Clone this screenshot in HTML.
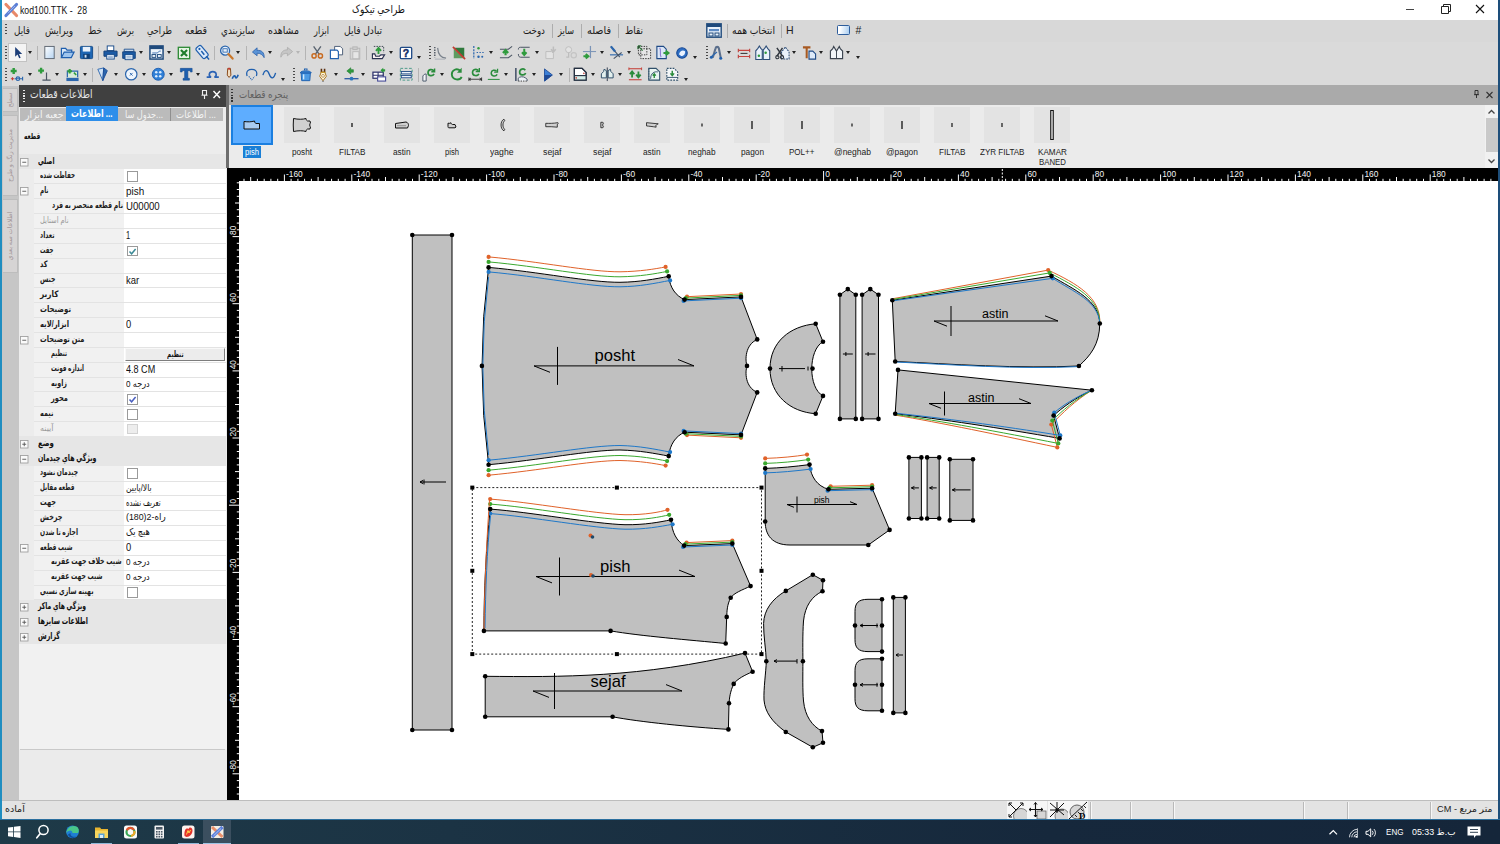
<!DOCTYPE html>
<html lang="fa"><head><meta charset="utf-8"><title>kod100.TTK</title><style>
*{box-sizing:border-box;margin:0;padding:0}
html,body{width:1500px;height:844px;overflow:hidden}
body{position:relative;background:#d9d9d9;font-family:"Liberation Sans","DejaVu Sans",sans-serif;font-size:11px;color:#000}
.a{position:absolute}
.t{position:absolute;white-space:nowrap;line-height:1}
svg{position:absolute;overflow:visible}
</style></head><body>
<div class="a" style="left:0px;top:0px;width:1500px;height:844px;background:#d9d9d9;"></div>
<div class="a" style="left:0px;top:0px;width:1500px;height:20px;background:#ffffff;"></div>
<div class="a" style="left:2px;top:20px;width:1496px;height:22px;background:#d8d8d8;"></div>
<div class="a" style="left:2px;top:42px;width:1496px;height:44px;background:#dadada;"></div>
<div class="a" style="left:0px;top:0px;width:2px;height:820px;background:#1f8dc0;"></div>
<div class="a" style="left:1498px;top:0px;width:2px;height:820px;background:#1d4e7a;"></div>
<svg class="a" style="left:4px;top:2px" width="15" height="16" viewBox="0 0 15 16"><path d="M2 2.5L12.5 13.5" stroke="#e8896a" stroke-width="3.2" stroke-linecap="round"/><path d="M12.5 2.5L2 13.5" stroke="#5b7fd6" stroke-width="3.2" stroke-linecap="round"/><path d="M11 4L4 11.2" stroke="#9db4ec" stroke-width="1"/></svg>
<div class="t f" id="f1" style="left:20px;transform-origin:0 0;top:4.7px;font-size:10.5px;color:#111;transform:scaleX(0.8259);">kod100.TTK -&nbsp; 28</div>
<div class="t f" id="f2" style="left:352px;transform-origin:0 0;top:3.5px;font-size:10.5px;color:#111;transform:scaleX(0.8555);direction:rtl;">طراحي تيكوک</div>
<svg class="a" style="left:1400px;top:0" width="100" height="20" viewBox="0 0 100 20"><path d="M6 9.5H14" stroke="#444" stroke-width="1"/><path d="M41.5 6.5H48.5V13.5H41.5Z M43.5 6.5V4.5H50.5V11.5H48.5" fill="none" stroke="#222" stroke-width="1"/><path d="M76 5L84 13M84 5L76 13" stroke="#111" stroke-width="1.1"/></svg>
<div class="a" style="left:5px;top:24px;width:1.6px;height:12px;background:repeating-linear-gradient(#4a4a4a 0 1.4px,transparent 1.4px 3px)"></div>
<div class="t f" id="f3" style="left:14px;transform-origin:0 0;top:22px;font-size:10.5px;color:#1a1a1a;transform:scaleX(0.8380);direction:rtl;height:16px;line-height:16px;">فايل</div>
<div class="t f" id="f4" style="left:45px;transform-origin:0 0;top:22px;font-size:10.5px;color:#1a1a1a;transform:scaleX(0.8481);direction:rtl;height:16px;line-height:16px;">ويرايش</div>
<div class="t f" id="f5" style="left:88px;transform-origin:0 0;top:22px;font-size:10.5px;color:#1a1a1a;transform:scaleX(0.8501);direction:rtl;height:16px;line-height:16px;">خط</div>
<div class="t f" id="f6" style="left:117px;transform-origin:0 0;top:22px;font-size:10.5px;color:#1a1a1a;transform:scaleX(0.7890);direction:rtl;height:16px;line-height:16px;">برش</div>
<div class="t f" id="f7" style="left:147px;transform-origin:0 0;top:22px;font-size:10.5px;color:#1a1a1a;transform:scaleX(0.7737);direction:rtl;height:16px;line-height:16px;">طراحي</div>
<div class="t f" id="f8" style="left:185px;transform-origin:0 0;top:22px;font-size:10.5px;color:#1a1a1a;transform:scaleX(0.9043);direction:rtl;height:16px;line-height:16px;">قطعه</div>
<div class="t f" id="f9" style="left:221px;transform-origin:0 0;top:22px;font-size:10.5px;color:#1a1a1a;transform:scaleX(0.8385);direction:rtl;height:16px;line-height:16px;">سايزبندي</div>
<div class="t f" id="f10" style="left:268px;transform-origin:0 0;top:22px;font-size:10.5px;color:#1a1a1a;transform:scaleX(0.8921);direction:rtl;height:16px;line-height:16px;">مشاهده</div>
<div class="t f" id="f11" style="left:314px;transform-origin:0 0;top:22px;font-size:10.5px;color:#1a1a1a;transform:scaleX(0.7643);direction:rtl;height:16px;line-height:16px;">ابزار</div>
<div class="t f" id="f12" style="left:344px;transform-origin:0 0;top:22px;font-size:10.5px;color:#1a1a1a;transform:scaleX(0.8714);direction:rtl;height:16px;line-height:16px;">تبادل فايل</div>
<div class="t f" id="f13" style="left:523px;transform-origin:0 0;top:22px;font-size:10.5px;color:#1a1a1a;transform:scaleX(0.8282);direction:rtl;height:16px;line-height:16px;">دوخت</div>
<div class="t f" id="f14" style="left:558px;transform-origin:0 0;top:22px;font-size:10.5px;color:#1a1a1a;transform:scaleX(0.7722);direction:rtl;height:16px;line-height:16px;">سايز</div>
<div class="t f" id="f15" style="left:587px;transform-origin:0 0;top:22px;font-size:10.5px;color:#1a1a1a;transform:scaleX(0.9143);direction:rtl;height:16px;line-height:16px;">فاصله</div>
<div class="t f" id="f16" style="left:625px;transform-origin:0 0;top:22px;font-size:10.5px;color:#1a1a1a;transform:scaleX(0.8508);direction:rtl;height:16px;line-height:16px;">نقاط</div>
<div class="t f" id="f17" style="left:732px;transform-origin:0 0;top:22px;font-size:10.5px;color:#1a1a1a;transform:scaleX(0.8770);direction:rtl;height:16px;line-height:16px;">انتخاب همه</div>
<div class="t" style="left:786px;top:24.5px;font-size:10.5px;color:#222;">H</div>
<div class="t" style="left:855.5px;top:24.5px;font-size:10.5px;color:#222;">#</div>
<div class="a" style="left:551.5px;top:23.5px;width:1px;height:14px;background:#adadad;"></div>
<div class="a" style="left:580.5px;top:23.5px;width:1px;height:14px;background:#adadad;"></div>
<div class="a" style="left:617.5px;top:23.5px;width:1px;height:14px;background:#adadad;"></div>
<div class="a" style="left:727px;top:23.5px;width:1px;height:14px;background:#adadad;"></div>
<div class="a" style="left:780.5px;top:23.5px;width:1px;height:14px;background:#adadad;"></div>
<svg class="a" style="left:706px;top:23px" width="16" height="15" viewBox="0 0 16 15"><rect x="0.8" y="0.8" width="14.4" height="13.4" fill="#e9f1fa" stroke="#1f4a7c" stroke-width="1.4"/><rect x="1" y="1" width="14" height="3" fill="#1f4a7c"/><rect x="3" y="6" width="10" height="2.2" fill="#5d8bc4"/><rect x="3" y="10" width="4" height="3" fill="none" stroke="#1f4a7c"/><rect x="9" y="10" width="4" height="3" fill="none" stroke="#1f4a7c"/></svg>
<div class="a" style="left:837px;top:25px;width:13px;height:10px;border:1px solid #2d5d9c;border-radius:1.5px;background:linear-gradient(100deg,#ffffff 20%,#a9cdf0)"></div>
<div class="a" style="left:5px;top:46px;width:1.6px;height:14px;background:repeating-linear-gradient(#4a4a4a 0 1.4px,transparent 1.4px 3px)"></div>
<div class="a" style="left:5px;top:68px;width:1.6px;height:14px;background:repeating-linear-gradient(#4a4a4a 0 1.4px,transparent 1.4px 3px)"></div>
<div class="a" style="left:8px;top:43px;width:19px;height:19px;background:#f4f4f4;border:1px solid #c2c2c2"></div>
<svg class="a" style="left:10px;top:45px" width="15" height="15" viewBox="0 0 16 16"><path d="M5.5 2V12.5L8 10.2L9.8 14.2L11.4 13.5L9.6 9.6H13Z" fill="#1d3e78"/></svg>
<div class="a" style="left:28px;top:51px;width:0;height:0;border-left:2.5px solid transparent;border-right:2.5px solid transparent;border-top:3px solid #222"></div>
<div class="a" style="left:37px;top:45.5px;width:1px;height:14px;background:#b4b4b4;"></div>
<svg class="a" style="left:41.5px;top:45px" width="15" height="15" viewBox="0 0 16 16"><defs><linearGradient id="gnew" x1="0" y1="0" x2="1" y2="1"><stop offset="0" stop-color="#fff"/><stop offset="1" stop-color="#b6d4f2"/></linearGradient></defs><rect x="3" y="1.5" width="10" height="13" fill="url(#gnew)" stroke="#5b6470"/></svg>
<svg class="a" style="left:60px;top:45px" width="15" height="15" viewBox="0 0 16 16"><path d="M1.5 13.5V3.5H6L7.5 5.5H12.5V7.5" fill="#dbe9f8" stroke="#1f5fae" stroke-width="1.3"/><path d="M1.5 13.5L4.5 7.5H15L12 13.5Z" fill="#9fc5ee" stroke="#1f5fae" stroke-width="1.3"/></svg>
<svg class="a" style="left:79px;top:45px" width="15" height="15" viewBox="0 0 16 16"><rect x="1.5" y="1.5" width="13" height="13" rx="1" fill="#1d66b4" stroke="#134a86"/><rect x="4" y="2" width="8" height="5" fill="#e8f1fb"/><rect x="4.5" y="9.5" width="7" height="5" fill="#0f3f76"/><rect x="6" y="10.5" width="2" height="3" fill="#cfe0f3"/></svg>
<div class="a" style="left:98px;top:45.5px;width:1px;height:14px;background:#b4b4b4;"></div>
<svg class="a" style="left:102.5px;top:45px" width="15" height="15" viewBox="0 0 16 16"><rect x="4.5" y="1" width="7" height="5" fill="#fff" stroke="#174a8a"/><path d="M1 6.5H15V12H1Z" fill="#1b5ba6" stroke="#123f78"/><rect x="4" y="10" width="8" height="5" fill="#eaf2fb" stroke="#174a8a"/><path d="M5.5 12H10.5M5.5 13.5H10.5" stroke="#6f93c0" stroke-width=".8"/></svg>
<svg class="a" style="left:122px;top:46.5px" width="14" height="14" viewBox="0 0 16 16"><path d="M2.5 5H13.5V2.5H2.5Z" fill="#d9e7f6" stroke="#174a8a"/><path d="M0.8 5.5H15.2V13H0.8Z" fill="#1b5ba6" stroke="#123f78"/><rect x="3.5" y="8.5" width="9" height="6" fill="#eaf2fb" stroke="#174a8a"/><path d="M5 10.5H11M5 12.5H11" stroke="#6f93c0" stroke-width=".8"/></svg>
<div class="a" style="left:139px;top:51px;width:0;height:0;border-left:2.5px solid transparent;border-right:2.5px solid transparent;border-top:3px solid #222"></div>
<svg class="a" style="left:148.5px;top:45px" width="15" height="15" viewBox="0 0 16 16"><rect x="1" y="1" width="14" height="14" fill="#eef4fb" stroke="#1f4a7c" stroke-width="1.6"/><rect x="1" y="1" width="14" height="3.4" fill="#1f4a7c"/><path d="M3.5 8.5H9L11 6.5H12.5" stroke="#3b6eaf" fill="none"/><rect x="3.2" y="10.2" width="4" height="3" fill="none" stroke="#1f4a7c"/><rect x="9" y="10.2" width="4" height="3" fill="none" stroke="#1f4a7c"/></svg>
<div class="a" style="left:166.5px;top:51px;width:0;height:0;border-left:2.5px solid transparent;border-right:2.5px solid transparent;border-top:3px solid #222"></div>
<svg class="a" style="left:176.5px;top:46px" width="14" height="14" viewBox="0 0 16 16"><rect x="1.5" y="1.5" width="13" height="13" fill="#e6f4e4" stroke="#2d8a35" stroke-width="1.5"/><path d="M4.5 4.5L11.5 11.5M11.5 4.5L4.5 11.5" stroke="#1e7d2b" stroke-width="2.4"/></svg>
<svg class="a" style="left:194.5px;top:45px" width="15" height="15" viewBox="0 0 16 16"><g transform="rotate(-40 8 8)"><rect x="4.5" y="0" width="7" height="14.5" rx="2" fill="#dbe9f9" stroke="#1f5fae" stroke-width="1.3"/><circle cx="8" cy="3" r="1.2" fill="#1f5fae"/><path d="M8 6V11" stroke="#1f5fae" stroke-width="1.6"/></g><path d="M12 12L15 15.5" stroke="#1f5fae" stroke-width="1.5"/></svg>
<div class="a" style="left:214px;top:45.5px;width:1px;height:14px;background:#b4b4b4;"></div>
<svg class="a" style="left:219px;top:45px" width="15" height="15" viewBox="0 0 16 16"><circle cx="6.5" cy="6" r="4.8" fill="#e8f1fb" stroke="#2b66ad" stroke-width="1.4"/><rect x="4.2" y="4" width="4.6" height="3.6" fill="none" stroke="#2b66ad" stroke-width=".9"/><path d="M10 9.7L14.5 14.5" stroke="#c9772b" stroke-width="2.4" stroke-linecap="round"/></svg>
<div class="a" style="left:236px;top:51px;width:0;height:0;border-left:2.5px solid transparent;border-right:2.5px solid transparent;border-top:3px solid #222"></div>
<div class="a" style="left:246px;top:45.5px;width:1px;height:14px;background:#b4b4b4;"></div>
<svg class="a" style="left:250.5px;top:45px" width="15" height="15" viewBox="0 0 16 16"><path d="M1.5 7.5L6.5 3V5.8C11 5.2,14.5 8,14 13.5C12.5 10.5,10 8.6,6.5 8.8V11.5Z" fill="#5a93d6" stroke="#2a5fa8" stroke-width=".8"/></svg>
<div class="a" style="left:268px;top:51px;width:0;height:0;border-left:2.5px solid transparent;border-right:2.5px solid transparent;border-top:3px solid #222"></div>
<svg class="a" style="left:278.5px;top:45px" width="15" height="15" viewBox="0 0 16 16"><path d="M14.5 7L9 2.5V5.2C4.5 5,1.5 8,2 13C3.2 10,5.5 8.6,9 8.9V11.5Z" fill="#c6c6c6" stroke="#adadad" stroke-width=".9"/></svg>
<div class="a" style="left:295.5px;top:51px;width:0;height:0;border-left:2.5px solid transparent;border-right:2.5px solid transparent;border-top:3px solid #b5b5b5"></div>
<div class="a" style="left:305px;top:45.5px;width:1px;height:14px;background:#b4b4b4;"></div>
<svg class="a" style="left:309.75px;top:45.25px" width="14.5" height="14.5" viewBox="0 0 16 16"><path d="M4 1.5L10 10M12 1.5L6 10" stroke="#5a6470" stroke-width="1.5"/><circle cx="4.5" cy="12" r="2.3" fill="none" stroke="#c86a20" stroke-width="1.6"/><circle cx="11.5" cy="12" r="2.3" fill="none" stroke="#c86a20" stroke-width="1.6"/></svg>
<svg class="a" style="left:328.5px;top:45px" width="15" height="15" viewBox="0 0 16 16"><path d="M6 1.5H12L14.5 4V10.5H6Z" fill="#fff" stroke="#475a74"/><path d="M1.5 5.5H8.5L10 7V14.5H1.5Z" fill="#fff" stroke="#1f5fae" stroke-width="1.2"/></svg>
<svg class="a" style="left:348px;top:45.5px" width="14" height="14" viewBox="0 0 16 16"><rect x="2.5" y="2.5" width="11" height="12.5" fill="#d6d6d6" stroke="#b3b3b3"/><rect x="5.5" y="1" width="5" height="3" fill="#cdcdcd" stroke="#b3b3b3"/><rect x="5.5" y="6.5" width="7" height="8" fill="#e6e6e6" stroke="#b8b8b8"/></svg>
<div class="a" style="left:366px;top:45.5px;width:1px;height:14px;background:#b4b4b4;"></div>
<svg class="a" style="left:370.5px;top:45px" width="15" height="15" viewBox="0 0 16 16"><path d="M3 1.5H13.5V8" fill="none" stroke="#39424e" stroke-dasharray="1.6 1.2"/><path d="M8 9.5V4M5.3 6.3L8 3.2L10.7 6.3" fill="none" stroke="#2f9b3d" stroke-width="2"/><path d="M1.5 9.5V14.5H12L14.5 10.5H10.5L9 12H5L4 9.5Z" fill="#fbf3f3" stroke="#2a3250" stroke-width="1.2"/></svg>
<div class="a" style="left:388.5px;top:51px;width:0;height:0;border-left:2.5px solid transparent;border-right:2.5px solid transparent;border-top:3px solid #222"></div>
<svg class="a" style="left:398.5px;top:45.5px" width="14" height="14" viewBox="0 0 16 16"><rect x="1.5" y="1.5" width="13" height="13" rx="1.5" fill="#fff" stroke="#1f4a86" stroke-width="1.5"/><text x="8" y="12.3" font-size="12" font-weight="bold" text-anchor="middle" fill="#14306a" stroke="#14306a" stroke-width=".5" font-family="Liberation Sans">?</text></svg>
<div class="a" style="left:416.5px;top:55.5px;width:0;height:0;border-left:2.5px solid transparent;border-right:2.5px solid transparent;border-top:3px solid #222"></div>
<div class="a" style="left:429px;top:46px;width:1.6px;height:14px;background:repeating-linear-gradient(#4a4a4a 0 1.4px,transparent 1.4px 3px)"></div>
<svg class="a" style="left:431.5px;top:45.5px" width="15" height="15" viewBox="0 0 16 16"><path d="M3 1V12" stroke="#39424e" stroke-dasharray="1.5 1.2" stroke-width="1.3"/><path d="M6 2C6.5 9,9 12.5,15 13" fill="none" stroke="#7a828c" stroke-width="1.3"/><path d="M3 14H14" stroke="#a7adb4"/></svg>
<svg class="a" style="left:452px;top:45.5px" width="14" height="14" viewBox="0 0 16 16"><path d="M2 14V3L14 14Z" fill="#5f9c60"/><path d="M2 2H14V14Z" fill="#2f7a3d"/><path d="M1 1L15 15" stroke="#c43a32" stroke-width="1.8"/></svg>
<svg class="a" style="left:470.5px;top:45px" width="15" height="15" viewBox="0 0 16 16"><path d="M3 1V15" stroke="#2b66ad" stroke-width="1.3" stroke-dasharray="2.2 1.2"/><path d="M6 8H14" stroke="#2b66ad" stroke-dasharray="1.5 1.5" stroke-width="1.3"/><circle cx="8" cy="3.5" r="1.3" fill="#2f9b3d"/><circle cx="8" cy="12.5" r="1.3" fill="#2b66ad"/><circle cx="12" cy="12.5" r="1.1" fill="#2b66ad"/></svg>
<div class="a" style="left:488.5px;top:51px;width:0;height:0;border-left:2.5px solid transparent;border-right:2.5px solid transparent;border-top:3px solid #222"></div>
<svg class="a" style="left:498.5px;top:45px" width="15" height="15" viewBox="0 0 16 16"><path d="M1 4.5H10L14 1.5M1 13.5H10L14 10.5" fill="none" stroke="#4b5563" stroke-width="1.1"/><path d="M7 11V6.5M4.2 8.5L7 5.5L9.8 8.5" fill="none" stroke="#2f9b3d" stroke-width="2.3"/></svg>
<svg class="a" style="left:517.25px;top:45.25px" width="14.5" height="14.5" viewBox="0 0 16 16"><path d="M1.5 5C1.5 2.5,3 2.5,4 2.5H14M1.5 10C1.5 13,3 13.5,4 13.5H14" fill="none" stroke="#4b5563" stroke-width="1.1"/><path d="M8 4V10M5.5 8L8 11L10.5 8" fill="none" stroke="#2f9b3d" stroke-width="2.2"/></svg>
<div class="a" style="left:534.5px;top:51px;width:0;height:0;border-left:2.5px solid transparent;border-right:2.5px solid transparent;border-top:3px solid #222"></div>
<svg class="a" style="left:543.5px;top:45px" width="15" height="15" viewBox="0 0 16 16"><path d="M2 7H8L10 9V14.5H2Z" fill="#e3e3e3" stroke="#bdbdbd"/><path d="M10 1.5V7M7.5 4.5L10 7.5L12.5 4.5" fill="none" stroke="#bdbdbd" stroke-width="1.6"/></svg>
<svg class="a" style="left:562.5px;top:45px" width="15" height="15" viewBox="0 0 16 16"><circle cx="6" cy="5" r="3.2" fill="#e3e3e3" stroke="#bdbdbd"/><path d="M6 8V13H3.5" fill="none" stroke="#bdbdbd" stroke-width="1.3"/><circle cx="11.5" cy="11" r="2.8" fill="none" stroke="#c4c4c4" stroke-width="1.3"/></svg>
<svg class="a" style="left:581.5px;top:45px" width="15" height="15" viewBox="0 0 16 16"><path d="M9 1V14" stroke="#7a93b6" stroke-width="1.3"/><path d="M1 7H15" stroke="#7a93b6" stroke-width="1.1"/><path d="M1.5 12H5.5M4 9.5L6.8 12L4 14.5" fill="none" stroke="#2f9b3d" stroke-width="2.2"/></svg>
<div class="a" style="left:599.5px;top:51px;width:0;height:0;border-left:2.5px solid transparent;border-right:2.5px solid transparent;border-top:3px solid #222"></div>
<svg class="a" style="left:608.5px;top:45px" width="15" height="15" viewBox="0 0 16 16"><path d="M1 10.5H15" stroke="#2b66ad" stroke-width="1.2"/><path d="M2 1.5L11.5 13M13.5 8L5 14.5" stroke="#475569" stroke-width="1.2"/><path d="M2 1.5L6.5 7" stroke="#2b66ad" stroke-width="2.4"/></svg>
<div class="a" style="left:626.5px;top:51px;width:0;height:0;border-left:2.5px solid transparent;border-right:2.5px solid transparent;border-top:3px solid #222"></div>
<svg class="a" style="left:636.5px;top:45px" width="15" height="15" viewBox="0 0 16 16"><rect x="4" y="4" width="10.5" height="10.5" fill="#e6e6e6" stroke="#333" stroke-dasharray="1.6 1.2"/><path d="M1 1L6 6M1 1H4.5M1 1V4.5" stroke="#2f7a3d" stroke-width="1.3" fill="none"/><rect x="1.5" y="1.5" width="9" height="9" fill="none" stroke="#333" stroke-dasharray="1.5 1.3"/></svg>
<svg class="a" style="left:654.5px;top:45px" width="15" height="15" viewBox="0 0 16 16"><path d="M2 1.5H9L12 4.5V14.5H2Z" fill="#dbe7f7" stroke="#1f4a86" stroke-width="1.2"/><path d="M5 3C7 6,4.5 9,6.5 13" fill="none" stroke="#8a7bd0" stroke-width="1.2"/><path d="M9 8.5H13M11.5 6L14.5 8.5L11.5 11" fill="none" stroke="#2f9b3d" stroke-width="2"/></svg>
<svg class="a" style="left:674.5px;top:45.5px" width="14" height="14" viewBox="0 0 16 16"><circle cx="8" cy="8" r="6" fill="#2f6fc4" stroke="#1b4b96" stroke-width="1.3"/><path d="M4.5 9.5C5.5 5.5,9 4,11.5 6C12 9,10 11.5,7 11.5Z" fill="#eaf2ff"/></svg>
<div class="a" style="left:692.5px;top:55.5px;width:0;height:0;border-left:2.5px solid transparent;border-right:2.5px solid transparent;border-top:3px solid #222"></div>
<div class="a" style="left:706px;top:46px;width:1.6px;height:14px;background:repeating-linear-gradient(#4a4a4a 0 1.4px,transparent 1.4px 3px)"></div>
<svg class="a" style="left:708.5px;top:45px" width="15" height="15" viewBox="0 0 16 16"><path d="M4 13.5L7 3.5C7.5 1.5,10 1.5,10.5 3.5L12.5 13.5" fill="none" stroke="#5b6f8c" stroke-width="2.2"/><path d="M2 13L8.5 7.5" stroke="#2b66ad" stroke-width="1.3"/><circle cx="2.5" cy="13" r="1.6" fill="#1f5fae"/><circle cx="12.5" cy="14" r="1.6" fill="#1f5fae"/></svg>
<div class="a" style="left:726.5px;top:51px;width:0;height:0;border-left:2.5px solid transparent;border-right:2.5px solid transparent;border-top:3px solid #222"></div>
<svg class="a" style="left:736.5px;top:45.5px" width="14" height="14" viewBox="0 0 16 16"><path d="M1.5 3V7M14.5 3V7M1.5 10V14M14.5 10V14" stroke="#b63a36" stroke-width="1.2"/><path d="M1.5 5H14.5M1.5 12H14.5" stroke="#c9453f" stroke-width="1.4"/><path d="M4 8.5H12" stroke="#444" stroke-width="1.3"/></svg>
<svg class="a" style="left:754.75px;top:44.75px" width="15.5" height="15.5" viewBox="0 0 16 16"><path d="M0.8 15V6L3 3.5L4.5 1L6 3.5L7.5 5V15Z" fill="#eaf2fb" stroke="#2e4e78" stroke-width="1.1"/><path d="M8.5 15V5L10 3.5L11.5 1L13 3.5L15.2 6V15Z" fill="#eaf2fb" stroke="#2e4e78" stroke-width="1.1"/><circle cx="4" cy="11" r="1.3" fill="#2f9b3d"/><circle cx="11" cy="8" r="1.3" fill="#2f9b3d"/></svg>
<svg class="a" style="left:774.5px;top:45px" width="15" height="15" viewBox="0 0 16 16"><path d="M7 15V7L9.5 4.5L11 2L12.5 4.5L15 7V15Z" fill="#eaf2fb" stroke="#2e4e78" stroke-width="1.1" stroke-dasharray="2 1"/><path d="M2 3L8 12M8 3L2 12" stroke="#30363e" stroke-width="1.5"/><circle cx="2.5" cy="13" r="1.7" fill="none" stroke="#30363e" stroke-width="1.2"/><circle cx="7.5" cy="13" r="1.7" fill="none" stroke="#30363e" stroke-width="1.2"/></svg>
<div class="a" style="left:792px;top:51px;width:0;height:0;border-left:2.5px solid transparent;border-right:2.5px solid transparent;border-top:3px solid #222"></div>
<svg class="a" style="left:802px;top:45px" width="15" height="15" viewBox="0 0 16 16"><path d="M1 2.5H9M5 2.5V14" stroke="#a85a22" stroke-width="2.2"/><path d="M7.5 6.5H11.5L14.5 9.5V15H7.5Z" fill="#dde9f8" stroke="#1f4a86" stroke-width="1.2"/></svg>
<div class="a" style="left:819px;top:51px;width:0;height:0;border-left:2.5px solid transparent;border-right:2.5px solid transparent;border-top:3px solid #222"></div>
<svg class="a" style="left:828.5px;top:45px" width="15" height="15" viewBox="0 0 16 16"><path d="M1.5 14.5V6.5L4 4L5 1.5L8 6.5L11 1.5L12 4L14.5 6.5V14.5Z" fill="#f0f4f8" stroke="#39424e" stroke-width="1.2"/><path d="M8 6.5V14.5" stroke="#39424e"/></svg>
<div class="a" style="left:846px;top:51px;width:0;height:0;border-left:2.5px solid transparent;border-right:2.5px solid transparent;border-top:3px solid #222"></div>
<div class="a" style="left:855.5px;top:55.5px;width:0;height:0;border-left:2.5px solid transparent;border-right:2.5px solid transparent;border-top:3px solid #222"></div>
<svg class="a" style="left:9px;top:67px" width="15" height="15" viewBox="0 0 16 16"><path d="M5 1V7.5M1.8 4.2H8.2" stroke="#2f9b3d" stroke-width="2.6"/><path d="M6 12.5H15M14.5 10.5V14.5" stroke="#2b66ad" stroke-width="1.2"/><circle cx="9.5" cy="12.5" r="1.9" fill="none" stroke="#2b66ad" stroke-width="1.3"/><path d="M2 12.5H5.5M3.7 10.8V14.2" stroke="#c43a32" stroke-width="1.2" fill="none"/></svg>
<div class="a" style="left:28px;top:73px;width:0;height:0;border-left:2.5px solid transparent;border-right:2.5px solid transparent;border-top:3px solid #222"></div>
<svg class="a" style="left:37.25px;top:67.25px" width="14.5" height="14.5" viewBox="0 0 16 16"><path d="M4.5 0.8V7.2M1.3 4H7.7" stroke="#2f9b3d" stroke-width="2.6"/><path d="M10.5 6V14.5M6 14.5H15" stroke="#4b5563" stroke-width="1.3"/></svg>
<div class="a" style="left:55px;top:73px;width:0;height:0;border-left:2.5px solid transparent;border-right:2.5px solid transparent;border-top:3px solid #222"></div>
<svg class="a" style="left:64.5px;top:67px" width="15" height="15" viewBox="0 0 16 16"><path d="M1.5 11.5H14.5V15H1.5Z" fill="#2b66ad"/><path d="M2.5 11V4.5H13.5V11" fill="#d8ecd9" stroke="#2b66ad" stroke-width="1.3"/><path d="M5 2V7M2.5 4.5H7.5" stroke="#2f9b3d" stroke-width="2.2"/><path d="M9.5 6L12 8.5" stroke="#2f9b3d" stroke-width="1.6"/></svg>
<div class="a" style="left:82.5px;top:73px;width:0;height:0;border-left:2.5px solid transparent;border-right:2.5px solid transparent;border-top:3px solid #222"></div>
<div class="a" style="left:92px;top:67.5px;width:1px;height:14px;background:#b4b4b4;"></div>
<svg class="a" style="left:95.75px;top:67.25px" width="14.5" height="14.5" viewBox="0 0 16 16"><path d="M2 2.5L8.5 1L7.5 15Z" fill="#cfe2f6" stroke="#2b66ad"/><path d="M8.5 1L12.5 4L7.5 15Z" fill="#2b66ad" stroke="#1b4b96"/></svg>
<div class="a" style="left:114px;top:73px;width:0;height:0;border-left:2.5px solid transparent;border-right:2.5px solid transparent;border-top:3px solid #222"></div>
<svg class="a" style="left:124.25px;top:67.25px" width="14.5" height="14.5" viewBox="0 0 16 16"><circle cx="8" cy="8" r="6.3" fill="#eef5fd" stroke="#2b66ad" stroke-width="1.3"/><path d="M6.5 6.5L9.5 9.5M9.5 6.5L6.5 9.5" stroke="#2b66ad" stroke-width="1"/></svg>
<div class="a" style="left:141.5px;top:73px;width:0;height:0;border-left:2.5px solid transparent;border-right:2.5px solid transparent;border-top:3px solid #222"></div>
<svg class="a" style="left:151.25px;top:67.25px" width="14.5" height="14.5" viewBox="0 0 16 16"><circle cx="8" cy="8" r="6.6" fill="#2f7fd6" stroke="#1c5db0" stroke-width="1"/><circle cx="5.8" cy="5.8" r="1.4" fill="#d8ebff"/><circle cx="10.2" cy="5.8" r="1.4" fill="#d8ebff"/><circle cx="5.8" cy="10.2" r="1.4" fill="#d8ebff"/><circle cx="10.2" cy="10.2" r="1.4" fill="#d8ebff"/></svg>
<div class="a" style="left:169px;top:73px;width:0;height:0;border-left:2.5px solid transparent;border-right:2.5px solid transparent;border-top:3px solid #222"></div>
<svg class="a" style="left:179.25px;top:67.25px" width="14.5" height="14.5" viewBox="0 0 16 16"><path d="M1.5 1.5H14.5V5.5H12.5V4H9.8V12.5H11.5V14.5H4.5V12.5H6.2V4H3.5V5.5H1.5Z" fill="#1d5fb0" stroke="#164a8c" stroke-width=".6"/></svg>
<div class="a" style="left:196px;top:73px;width:0;height:0;border-left:2.5px solid transparent;border-right:2.5px solid transparent;border-top:3px solid #222"></div>
<svg class="a" style="left:206.25px;top:66.75px" width="13.5" height="13.5" viewBox="0 0 16 16"><path d="M0.8 12H6C2.5 10.5,3.5 5.5,8 5.5C12.5 5.5,13.5 10.5,10 12H15.2" fill="none" stroke="#2a62b4" stroke-width="1.9"/></svg>
<svg class="a" style="left:224.75px;top:67.25px" width="14.5" height="14.5" viewBox="0 0 16 16"><path d="M3 1.5L6 1.5L6.5 9L4.5 11.5L2.5 9Z" fill="#f1dcc0" stroke="#8b4c1c" stroke-width="1.1"/><circle cx="4.5" cy="2" r="1.2" fill="#c43a32"/><path d="M8 13C9 9.5,11 9,11.5 11C12 13,13.5 12,14.5 8.5" fill="none" stroke="#1f5fae" stroke-width="1.8"/></svg>
<svg class="a" style="left:244.75px;top:67.75px" width="13.5" height="13.5" viewBox="0 0 16 16"><path d="M2.5 9.5C0.5 3,5 1.5,8 1.5C11 1.5,15.5 3,13.5 9.5" fill="none" stroke="#1f5fae" stroke-width="1.5"/><path d="M4.5 10L8 14L11.5 10" fill="none" stroke="#1f5fae" stroke-dasharray="1.4 1.2" stroke-width="1.2"/></svg>
<svg class="a" style="left:262.25px;top:67.25px" width="14.5" height="14.5" viewBox="0 0 16 16"><path d="M1 9C3 2.5,6 2.5,8 8C10 13.5,13 13.5,15 6.5" fill="none" stroke="#1f5fae" stroke-width="1.5"/></svg>
<div class="a" style="left:280.5px;top:77.5px;width:0;height:0;border-left:2.5px solid transparent;border-right:2.5px solid transparent;border-top:3px solid #222"></div>
<div class="a" style="left:293px;top:68px;width:1.6px;height:14px;background:repeating-linear-gradient(#4a4a4a 0 1.4px,transparent 1.4px 3px)"></div>
<svg class="a" style="left:298.75px;top:67.75px" width="13.5" height="13.5" viewBox="0 0 16 16"><path d="M2.5 6H13.5L12.8 15H3.2Z" fill="#4b9ae4" stroke="#1d5fae" stroke-width="1.1"/><path d="M1.5 5.8C2 2.5,14 2.5,14.5 5.8Z" fill="#3b86d4" stroke="#1d5fae" stroke-width="1.1"/><path d="M6.5 2.6V1.2H9.5V2.6" fill="none" stroke="#1d5fae" stroke-width="1.2"/><path d="M5.5 7.5V13.5" stroke="#cfe6fb" stroke-width="1.6"/></svg>
<svg class="a" style="left:316px;top:67.5px" width="14" height="14" viewBox="0 0 16 16"><path d="M6 4.5H10L11.8 9.5L8 14.5L4.2 9.5Z" fill="#fff7e2" stroke="#a8741c" stroke-width="1.1"/><path d="M6.2 0.8V4.8M9.8 0.8V4.8" stroke="#5a2e0e" stroke-width="1.8"/><path d="M5.3 5H10.7" stroke="#c89a2a" stroke-width="1.4"/><circle cx="8" cy="9" r="1.6" fill="#fff" stroke="#a8741c" stroke-width=".8"/><path d="M8 14.5V16" stroke="#444"/></svg>
<div class="a" style="left:333.5px;top:73px;width:0;height:0;border-left:2.5px solid transparent;border-right:2.5px solid transparent;border-top:3px solid #222"></div>
<svg class="a" style="left:343.5px;top:67px" width="15" height="15" viewBox="0 0 16 16"><path d="M3 4.2L7.2 0.8V2.8H10V5.6H7.2V7.6Z" fill="#2f9b3d" stroke="#1f7a2d" stroke-width=".6"/><path d="M0.5 12.5H15.5" stroke="#1f4f9e" stroke-width="1.3"/><circle cx="8" cy="12.5" r="2" fill="#2b76bd"/></svg>
<div class="a" style="left:361px;top:73px;width:0;height:0;border-left:2.5px solid transparent;border-right:2.5px solid transparent;border-top:3px solid #222"></div>
<svg class="a" style="left:371.5px;top:67px" width="15" height="15" viewBox="0 0 16 16"><rect x="1" y="5.5" width="11" height="6.5" fill="#fff" stroke="#2a2f6a" stroke-width="1.3"/><path d="M1 8.7H12M6.5 5.5V12" stroke="#2a2f6a" stroke-width="1.1"/><rect x="6" y="10.5" width="8.5" height="4.5" fill="#fff" stroke="#4a4f9a" stroke-width="1.2"/><path d="M9 3.5L12 0.8V2.5H14V4.8H12V6.3Z" fill="#2f9b3d"/></svg>
<div class="a" style="left:388.5px;top:73px;width:0;height:0;border-left:2.5px solid transparent;border-right:2.5px solid transparent;border-top:3px solid #222"></div>
<svg class="a" style="left:399.25px;top:67.25px" width="14.5" height="14.5" viewBox="0 0 16 16"><rect x="1.5" y="1.5" width="13" height="13" fill="none" stroke="#4f9d8c" stroke-dasharray="3 1.8" stroke-width="1.1"/><rect x="2.5" y="5" width="11" height="2.6" fill="#eaf2fb" stroke="#1f4a86"/><rect x="2.5" y="9.3" width="11" height="2.6" fill="#eaf2fb" stroke="#1f4a86"/></svg>
<div class="a" style="left:418px;top:67.5px;width:1px;height:14px;background:#b4b4b4;"></div>
<svg class="a" style="left:421px;top:67px" width="15" height="15" viewBox="0 0 16 16"><path d="M2 15V9.5L4 7.5H5.5V15Z" fill="#f4f6f8" stroke="#475569"/><path d="M14 7.5C12 10.5,7.5 9.5,7.5 6C7.5 2.5,12 1.5,14 4.5" fill="none" stroke="#2a8c3c" stroke-width="1.8"/><path d="M14.5 1.5V5H11" fill="none" stroke="#2a8c3c" stroke-width="1.5"/></svg>
<div class="a" style="left:439.5px;top:73px;width:0;height:0;border-left:2.5px solid transparent;border-right:2.5px solid transparent;border-top:3px solid #222"></div>
<svg class="a" style="left:448.5px;top:67px" width="15" height="15" viewBox="0 0 16 16"><path d="M13.5 10.5C11.5 15,3.5 14,3 8C2.8 3,8.5 0.8,12 4" fill="none" stroke="#2a8c3c" stroke-width="2"/><path d="M13.5 0.8V6H8.5Z" fill="#2a8c3c"/></svg>
<svg class="a" style="left:468.25px;top:67.25px" width="14.5" height="14.5" viewBox="0 0 16 16"><path d="M12 7.5C10.5 10.5,5 10,5 6C5 2.5,9.5 1.5,11.5 4" fill="none" stroke="#2a8c3c" stroke-width="1.8"/><path d="M12.5 1V5H8.5" fill="none" stroke="#2a8c3c" stroke-width="1.5"/><path d="M1 13.5H15M1 11.5V15.5M15 11.5V15.5" stroke="#333" stroke-width="1"/><path d="M1 13.5L3.2 12.3M1 13.5L3.2 14.7M15 13.5L12.8 12.3M15 13.5L12.8 14.7" stroke="#222" stroke-width=".9"/></svg>
<svg class="a" style="left:487.25px;top:67.75px" width="13.5" height="13.5" viewBox="0 0 16 16"><path d="M12 7.5C10.5 10.5,5 10,5 6C5 2.5,9.5 1.5,11.5 4" fill="none" stroke="#2a8c3c" stroke-width="1.8"/><path d="M12.5 1V5H8.5" fill="none" stroke="#2a8c3c" stroke-width="1.5"/><path d="M1 13.5H15" stroke="#2a8c3c" stroke-width="1.2"/></svg>
<div class="a" style="left:504px;top:73px;width:0;height:0;border-left:2.5px solid transparent;border-right:2.5px solid transparent;border-top:3px solid #222"></div>
<svg class="a" style="left:513.5px;top:67px" width="15" height="15" viewBox="0 0 16 16"><path d="M2 1V15" stroke="#2b3a55" stroke-width="1.4"/><path d="M12.5 6.5C11 9.5,6 9,6 5.5C6 2,10.5 1,12 3.5" fill="none" stroke="#2a8c3c" stroke-width="1.8"/><path d="M4.5 15V12C6 10,10 10,12 11.5L14 13V15" fill="#eef2f7" stroke="#475569"/><path d="M4.5 15H14.5" stroke="#333" stroke-dasharray="1.4 1.2"/></svg>
<div class="a" style="left:531.5px;top:73px;width:0;height:0;border-left:2.5px solid transparent;border-right:2.5px solid transparent;border-top:3px solid #222"></div>
<svg class="a" style="left:541px;top:67.5px" width="14" height="14" viewBox="0 0 16 16"><path d="M4 1L13 8L4 15Z" fill="#3b7fd6" stroke="#1f4a96"/><path d="M4 8H13L4 15Z" fill="#1f4a96"/></svg>
<div class="a" style="left:559px;top:73px;width:0;height:0;border-left:2.5px solid transparent;border-right:2.5px solid transparent;border-top:3px solid #222"></div>
<div class="a" style="left:569px;top:67.5px;width:1px;height:14px;background:#b4b4b4;"></div>
<svg class="a" style="left:573.25px;top:67.25px" width="14.5" height="14.5" viewBox="0 0 16 16"><path d="M1.5 1.5H10L14.5 6V14.5H1.5Z" fill="#fff" stroke="#253041" stroke-width="1.3"/><path d="M1.5 9.5H14.5" stroke="#253041" stroke-width="1.2"/><path d="M1.5 9.5H14.5V14.5H1.5Z" fill="#d5ece8"/><path d="M1.5 9.5H14.5" stroke="#253041" stroke-width="1.2"/><circle cx="12" cy="7" r=".9" fill="#c43a32"/><circle cx="3.5" cy="12" r=".9" fill="#c43a32"/><path d="M1.5 1.5H10L14.5 6V14.5H1.5Z" fill="none" stroke="#253041" stroke-width="1.3"/></svg>
<div class="a" style="left:591px;top:73px;width:0;height:0;border-left:2.5px solid transparent;border-right:2.5px solid transparent;border-top:3px solid #222"></div>
<svg class="a" style="left:599.75px;top:67.25px" width="14.5" height="14.5" viewBox="0 0 16 16"><path d="M8 0.5V15.5" stroke="#253041" stroke-width="1"/><path d="M7 4L4.5 2.5L4 5L1.5 7.5V12H7Z" fill="#e3f0ee" stroke="#31506a" stroke-width="1.1"/><path d="M9 4L11.5 2.5L12 5L14.5 7.5V12H9Z" fill="#e3f0ee" stroke="#31506a" stroke-width="1.1"/></svg>
<div class="a" style="left:618px;top:73px;width:0;height:0;border-left:2.5px solid transparent;border-right:2.5px solid transparent;border-top:3px solid #222"></div>
<svg class="a" style="left:628.25px;top:67.25px" width="14.5" height="14.5" viewBox="0 0 16 16"><path d="M1 2H15M1 14H15" stroke="#c43a32" stroke-width="1.2"/><path d="M1 0.5V3.5M15 0.5V3.5" stroke="#c43a32"/><path d="M4.5 11.5V6M2 8L4.5 5L7 8" fill="none" stroke="#2a8c3c" stroke-width="2"/><path d="M11.5 5V10.5M9 8.5L11.5 11.5L14 8.5" fill="none" stroke="#2a8c3c" stroke-width="2"/></svg>
<svg class="a" style="left:646.75px;top:67.25px" width="14.5" height="14.5" viewBox="0 0 16 16"><path d="M2 1.5H10L14 5.5V14.5H2Z" fill="#e9f4f2" stroke="#31506a" stroke-width="1.2"/><path d="M2 1.5V14.5" stroke="#31506a" stroke-dasharray="1.5 1.2"/><path d="M4 13C4 7,8 4.5,12 5.5" fill="none" stroke="#31506a"/><path d="M8 12V8M6.3 9.5L8 7.5L9.7 9.5" fill="none" stroke="#2a8c3c" stroke-width="1.5"/></svg>
<svg class="a" style="left:664.75px;top:67.25px" width="14.5" height="14.5" viewBox="0 0 16 16"><path d="M2 1.5H10L14 5.5V14.5H2Z" fill="#f3f6f8" stroke="#31506a" stroke-width="1.2" stroke-dasharray="2 1.2"/><path d="M8 4V9M6 7L8 9.5L10 7" fill="none" stroke="#2a8c3c" stroke-width="1.6"/><path d="M2 11.5H14" stroke="#31506a"/></svg>
<div class="a" style="left:683.5px;top:77.5px;width:0;height:0;border-left:2.5px solid transparent;border-right:2.5px solid transparent;border-top:3px solid #222"></div>
<div class="a" style="left:2px;top:86px;width:17px;height:714px;background:#c6c6c6;"></div>
<div class="a" style="left:3px;top:88px;width:15px;height:24px;background:#d6d4d4;border:1px solid #bdbdbd;border-left:none;"></div>
<div class="a" style="left:3px;top:88px;width:15px;height:24px;overflow:hidden"><div class="t" style="left:3.5px;top:24px;width:24px;text-align:center;font-size:6.5px;color:#a3979a;direction:rtl;transform-origin:0 0;transform:rotate(-90deg)">سطح</div></div>
<div class="a" style="left:3px;top:115px;width:15px;height:81px;background:#d6d4d4;border:1px solid #bdbdbd;border-left:none;"></div>
<div class="a" style="left:3px;top:115px;width:15px;height:81px;overflow:hidden"><div class="t" style="left:3.5px;top:81px;width:81px;text-align:center;font-size:6.5px;color:#a3979a;direction:rtl;transform-origin:0 0;transform:rotate(-90deg)">مديريت رنگ و طرح</div></div>
<div class="a" style="left:3px;top:199px;width:15px;height:74px;background:#d6d4d4;border:1px solid #bdbdbd;border-left:none;"></div>
<div class="a" style="left:3px;top:199px;width:15px;height:74px;overflow:hidden"><div class="t" style="left:3.5px;top:74px;width:74px;text-align:center;font-size:6.5px;color:#a3979a;direction:rtl;transform-origin:0 0;transform:rotate(-90deg)">اطلاعات سه بعدي</div></div>
<div class="a" style="left:19px;top:85px;width:207.5px;height:22px;background:#404040;"></div>
<div class="a" style="left:22.5px;top:90px;width:2px;height:12px;background:repeating-linear-gradient(#e8e8e8 0 1.3px,transparent 1.3px 2.7px)"></div>
<div class="t f" id="f18" style="left:30px;transform-origin:0 0;top:88.5px;font-size:11.5px;color:#e6e6e6;transform:scaleX(0.7971);direction:rtl;">اطلاعات قطعات</div>
<svg class="a" style="left:198px;top:88px" width="26" height="14" viewBox="0 0 26 14"><path d="M4.5 2.5H8.5V7H4.5Z M3.5 7.2H9.5 M6.5 7.2V11" fill="none" stroke="#eee" stroke-width="1.1"/><path d="M15.5 3L22 10M22 3L15.5 10" stroke="#fff" stroke-width="1.4"/></svg>
<div class="a" style="left:19px;top:107px;width:207.5px;height:693px;background:#ececec;"></div>
<div class="a" style="left:20px;top:107.5px;width:45.6px;height:13.3px;background:#bbbbbb;"></div>
<div class="a" style="left:118.4px;top:107.5px;width:51.8px;height:13.3px;background:#bbbbbb;"></div>
<div class="a" style="left:171px;top:107.5px;width:52.4px;height:13.3px;background:#bbbbbb;"></div>
<div class="a" style="left:65.6px;top:106px;width:52.8px;height:14.8px;background:#2d8eea;"></div>
<div class="a" style="left:170.2px;top:107.5px;width:0.8px;height:13.3px;background:#8f8f8f;"></div>
<div class="t f" id="f19" style="left:25px;transform-origin:0 0;top:108.5px;font-size:10.5px;color:#f3f3f3;transform:scaleX(0.8973);direction:rtl;">جعبه ابزار</div>
<div class="t f" id="f20" style="left:70.5px;transform-origin:0 0;top:108px;font-size:10.5px;color:#ffffff;transform:scaleX(0.7573);direction:rtl;font-weight:bold;">... اطلاعات</div>
<div class="t f" id="f21" style="left:125px;transform-origin:0 0;top:108.5px;font-size:10.5px;color:#f3f3f3;transform:scaleX(0.7855);direction:rtl;">...جدول سا</div>
<div class="t f" id="f22" style="left:176px;transform-origin:0 0;top:108.5px;font-size:10.5px;color:#f3f3f3;transform:scaleX(0.8237);direction:rtl;">... اطلاعات</div>
<div class="t f" id="f23" style="left:24px;transform-origin:0 0;top:132px;font-size:8.5px;color:#111;transform:scaleX(0.6845);direction:rtl;font-weight:bold;">قطعه</div>
<div class="a" style="left:19px;top:154.273px;width:207px;height:490.149px;background:#f1f1f1;"></div>
<div class="a" style="left:124px;top:154.273px;width:102px;height:490.149px;background:#ffffff;"></div>
<div class="a" style="left:19px;top:154.273px;width:14.5px;height:490.149px;background:#ececec;"></div>
<div class="a" style="left:19px;top:154.273px;width:207px;height:14.853px;background:#e6e6e6;"></div>
<div class="t f" id="f24" style="left:38px;transform-origin:0 0;top:156.6px;font-size:9.3px;color:#111;transform:scaleX(0.6502);direction:rtl;font-weight:bold;">اصلي</div>
<svg class="a" style="left:20px;top:157.5px" width="9" height="9" viewBox="0 0 9 9"><rect x=".5" y=".5" width="7.5" height="7.5" fill="#fafafa" stroke="#a0a0a0" stroke-width=".9"/><path d="M2.3 4.25H6.2" stroke="#555" stroke-width=".9"/></svg>
<div class="a" style="left:33.5px;top:183.48px;width:192.5px;height:0.8px;background:#e3e3e3;"></div>
<div class="t f" id="f25" style="left:39.5px;transform-origin:0 0;top:171.253px;font-size:8.8px;color:#1c1c1c;transform:scaleX(0.6369);direction:rtl;font-weight:bold;">حفاظت شده</div>
<div class="a" style="left:127px;top:171.353px;width:10.5px;height:10.5px;background:#ffffff;border:1px solid #9a9a9a"></div>
<div class="a" style="left:33.5px;top:198.332px;width:192.5px;height:0.8px;background:#e3e3e3;"></div>
<div class="t f" id="f26" style="left:39.5px;transform-origin:0 0;top:186.106px;font-size:8.8px;color:#1c1c1c;transform:scaleX(0.6507);direction:rtl;font-weight:bold;">نام</div>
<svg class="a" style="left:20px;top:187.206px" width="9" height="9" viewBox="0 0 9 9"><rect x=".5" y=".5" width="7.5" height="7.5" fill="#fafafa" stroke="#a0a0a0" stroke-width=".9"/><path d="M2.3 4.25H6.2" stroke="#555" stroke-width=".9"/></svg>
<div class="t f" id="f27" style="left:126.3px;transform-origin:0 0;top:185.806px;font-size:10.6px;color:#111;transform:scaleX(0.9363);">pish</div>
<div class="a" style="left:33.5px;top:213.185px;width:192.5px;height:0.8px;background:#e3e3e3;"></div>
<div class="t f" id="f28" style="left:51.5px;transform-origin:0 0;top:200.959px;font-size:8.8px;color:#1c1c1c;transform:scaleX(0.7004);direction:rtl;font-weight:bold;">نام قطعه منحصر به فرد</div>
<div class="t f" id="f29" style="left:126.3px;transform-origin:0 0;top:200.659px;font-size:10.6px;color:#111;transform:scaleX(0.9081);">U00000</div>
<div class="a" style="left:33.5px;top:228.038px;width:192.5px;height:0.8px;background:#e3e3e3;"></div>
<div class="t f" id="f30" style="left:39.5px;transform-origin:0 0;top:215.812px;font-size:8.8px;color:#9a9a9a;transform:scaleX(0.7645);direction:rtl;">نام استايل</div>
<div class="a" style="left:33.5px;top:242.891px;width:192.5px;height:0.8px;background:#e3e3e3;"></div>
<div class="t f" id="f31" style="left:39.5px;transform-origin:0 0;top:230.665px;font-size:8.8px;color:#1c1c1c;transform:scaleX(0.6941);direction:rtl;font-weight:bold;">تعداد</div>
<div class="t f" id="f32" style="left:126.3px;transform-origin:0 0;top:230.365px;font-size:10.6px;color:#111;transform:scaleX(0.7111);">1</div>
<div class="a" style="left:33.5px;top:257.744px;width:192.5px;height:0.8px;background:#e3e3e3;"></div>
<div class="t f" id="f33" style="left:39.5px;transform-origin:0 0;top:245.518px;font-size:8.8px;color:#1c1c1c;transform:scaleX(0.6141);direction:rtl;font-weight:bold;">جفت</div>
<div class="a" style="left:127px;top:245.618px;width:10.5px;height:10.5px;background:#ffffff;border:1px solid #9a9a9a"></div>
<svg class="a" style="left:127px;top:245.618px" width="11" height="11" viewBox="0 0 11 11"><path d="M2.5 5.6L4.6 7.8L8.6 3" fill="none" stroke="#3b8a96" stroke-width="1.5"/></svg>
<div class="a" style="left:33.5px;top:272.597px;width:192.5px;height:0.8px;background:#e3e3e3;"></div>
<div class="t f" id="f34" style="left:39.5px;transform-origin:0 0;top:260.371px;font-size:8.8px;color:#1c1c1c;transform:scaleX(0.7351);direction:rtl;font-weight:bold;">كد</div>
<div class="a" style="left:33.5px;top:287.45px;width:192.5px;height:0.8px;background:#e3e3e3;"></div>
<div class="t f" id="f35" style="left:39.5px;transform-origin:0 0;top:275.224px;font-size:8.8px;color:#1c1c1c;transform:scaleX(0.6927);direction:rtl;font-weight:bold;">جنس</div>
<div class="t f" id="f36" style="left:126.3px;transform-origin:0 0;top:274.924px;font-size:10.6px;color:#111;transform:scaleX(0.8968);">kar</div>
<div class="a" style="left:33.5px;top:302.303px;width:192.5px;height:0.8px;background:#e3e3e3;"></div>
<div class="t f" id="f37" style="left:39.5px;transform-origin:0 0;top:290.077px;font-size:8.8px;color:#1c1c1c;transform:scaleX(0.8309);direction:rtl;font-weight:bold;">كاربر</div>
<div class="a" style="left:33.5px;top:317.156px;width:192.5px;height:0.8px;background:#e3e3e3;"></div>
<div class="t f" id="f38" style="left:39.5px;transform-origin:0 0;top:304.93px;font-size:8.8px;color:#1c1c1c;transform:scaleX(0.7867);direction:rtl;font-weight:bold;">توضيحات</div>
<div class="a" style="left:33.5px;top:332.009px;width:192.5px;height:0.8px;background:#e3e3e3;"></div>
<div class="t f" id="f39" style="left:39.5px;transform-origin:0 0;top:319.783px;font-size:8.8px;color:#1c1c1c;transform:scaleX(0.7730);direction:rtl;font-weight:bold;">ابزار/لايه</div>
<div class="t f" id="f40" style="left:126.3px;transform-origin:0 0;top:319.483px;font-size:10.6px;color:#111;transform:scaleX(0.8804);">0</div>
<div class="a" style="left:33.5px;top:346.862px;width:192.5px;height:0.8px;background:#e3e3e3;"></div>
<div class="t f" id="f41" style="left:39.5px;transform-origin:0 0;top:334.636px;font-size:8.8px;color:#1c1c1c;transform:scaleX(0.7568);direction:rtl;font-weight:bold;">متن توضيحات</div>
<svg class="a" style="left:20px;top:335.736px" width="9" height="9" viewBox="0 0 9 9"><rect x=".5" y=".5" width="7.5" height="7.5" fill="#fafafa" stroke="#a0a0a0" stroke-width=".9"/><path d="M2.3 4.25H6.2" stroke="#555" stroke-width=".9"/></svg>
<div class="a" style="left:33.5px;top:361.715px;width:192.5px;height:0.8px;background:#e3e3e3;"></div>
<div class="t f" id="f42" style="left:51px;transform-origin:0 0;top:349.489px;font-size:8.8px;color:#1c1c1c;transform:scaleX(0.6165);direction:rtl;font-weight:bold;">تنظيم</div>
<div class="a" style="left:125px;top:348.389px;width:99.5px;height:12.6px;background:#ececec;border-top:1px solid #f8f8f8;border-left:1px solid #f8f8f8;border-right:1px solid #7d7d7d;border-bottom:1px solid #7d7d7d"></div>
<div class="t f" id="f43" style="left:166.5px;transform-origin:0 0;top:349.589px;font-size:8.6px;color:#111;transform:scaleX(0.6506);direction:rtl;font-weight:bold;">تنظيم</div>
<div class="a" style="left:33.5px;top:376.568px;width:192.5px;height:0.8px;background:#e3e3e3;"></div>
<div class="t f" id="f44" style="left:51px;transform-origin:0 0;top:364.342px;font-size:8.8px;color:#1c1c1c;transform:scaleX(0.6469);direction:rtl;font-weight:bold;">اندازه فونت</div>
<div class="t f" id="f45" style="left:126.3px;transform-origin:0 0;top:364.042px;font-size:10.6px;color:#111;transform:scaleX(0.8549);">4.8 CM</div>
<div class="a" style="left:33.5px;top:391.421px;width:192.5px;height:0.8px;background:#e3e3e3;"></div>
<div class="t f" id="f46" style="left:51px;transform-origin:0 0;top:379.195px;font-size:8.8px;color:#1c1c1c;transform:scaleX(0.7211);direction:rtl;font-weight:bold;">زاويه</div>
<div class="t f" id="f47" style="left:126.3px;transform-origin:0 0;top:378.695px;font-size:9.6px;color:#111;transform:scaleX(0.8464);direction:rtl;">درجه 0</div>
<div class="a" style="left:33.5px;top:406.274px;width:192.5px;height:0.8px;background:#e3e3e3;"></div>
<div class="t f" id="f48" style="left:51px;transform-origin:0 0;top:394.048px;font-size:8.8px;color:#1c1c1c;transform:scaleX(0.7598);direction:rtl;font-weight:bold;">محور</div>
<div class="a" style="left:127px;top:394.148px;width:10.5px;height:10.5px;background:#ffffff;border:1px solid #9a9a9a"></div>
<svg class="a" style="left:127px;top:394.148px" width="11" height="11" viewBox="0 0 11 11"><path d="M2.5 5.6L4.6 7.8L8.6 3" fill="none" stroke="#4a5fc0" stroke-width="1.5"/></svg>
<div class="a" style="left:33.5px;top:421.127px;width:192.5px;height:0.8px;background:#e3e3e3;"></div>
<div class="t f" id="f49" style="left:39.5px;transform-origin:0 0;top:408.901px;font-size:8.8px;color:#1c1c1c;transform:scaleX(0.7442);direction:rtl;font-weight:bold;">نيمه</div>
<div class="a" style="left:127px;top:409.001px;width:10.5px;height:10.5px;background:#ffffff;border:1px solid #9a9a9a"></div>
<div class="a" style="left:33.5px;top:435.98px;width:192.5px;height:0.8px;background:#e3e3e3;"></div>
<div class="t f" id="f50" style="left:39.5px;transform-origin:0 0;top:423.754px;font-size:8.8px;color:#9a9a9a;transform:scaleX(0.9047);direction:rtl;">آيينه</div>
<div class="a" style="left:127px;top:423.854px;width:10.5px;height:10.5px;background:#ededed;border:1px solid #d2d2d2"></div>
<div class="a" style="left:19px;top:436.481px;width:207px;height:14.853px;background:#e6e6e6;"></div>
<div class="t f" id="f51" style="left:38px;transform-origin:0 0;top:438.807px;font-size:9.3px;color:#111;transform:scaleX(0.7574);direction:rtl;font-weight:bold;">وضع</div>
<svg class="a" style="left:20px;top:439.707px" width="9" height="9" viewBox="0 0 9 9"><rect x=".5" y=".5" width="7.5" height="7.5" fill="#fafafa" stroke="#a0a0a0" stroke-width=".9"/><path d="M2.3 4.25H6.2 M4.25 2.3V6.2" stroke="#555" stroke-width=".9"/></svg>
<div class="a" style="left:19px;top:451.334px;width:207px;height:14.853px;background:#e6e6e6;"></div>
<div class="t f" id="f52" style="left:38px;transform-origin:0 0;top:453.66px;font-size:9.3px;color:#111;transform:scaleX(0.6759);direction:rtl;font-weight:bold;">ويژگي هاي چيدمان</div>
<svg class="a" style="left:20px;top:454.56px" width="9" height="9" viewBox="0 0 9 9"><rect x=".5" y=".5" width="7.5" height="7.5" fill="#fafafa" stroke="#a0a0a0" stroke-width=".9"/><path d="M2.3 4.25H6.2" stroke="#555" stroke-width=".9"/></svg>
<div class="a" style="left:33.5px;top:480.539px;width:192.5px;height:0.8px;background:#e3e3e3;"></div>
<div class="t f" id="f53" style="left:39.5px;transform-origin:0 0;top:468.313px;font-size:8.8px;color:#1c1c1c;transform:scaleX(0.6786);direction:rtl;font-weight:bold;">چيدمان نشود</div>
<div class="a" style="left:127px;top:468.413px;width:10.5px;height:10.5px;background:#ffffff;border:1px solid #9a9a9a"></div>
<div class="a" style="left:33.5px;top:495.392px;width:192.5px;height:0.8px;background:#e3e3e3;"></div>
<div class="t f" id="f54" style="left:39.5px;transform-origin:0 0;top:483.166px;font-size:8.8px;color:#1c1c1c;transform:scaleX(0.6471);direction:rtl;font-weight:bold;">قطعه مقابل</div>
<div class="t f" id="f55" style="left:126.3px;transform-origin:0 0;top:482.666px;font-size:9.6px;color:#111;transform:scaleX(0.7981);direction:rtl;">بالا/پايين</div>
<div class="a" style="left:33.5px;top:510.245px;width:192.5px;height:0.8px;background:#e3e3e3;"></div>
<div class="t f" id="f56" style="left:39.5px;transform-origin:0 0;top:498.019px;font-size:8.8px;color:#1c1c1c;transform:scaleX(0.7453);direction:rtl;font-weight:bold;">جهت</div>
<div class="t f" id="f57" style="left:126.3px;transform-origin:0 0;top:497.519px;font-size:9.6px;color:#111;transform:scaleX(0.7059);direction:rtl;">تعريف نشده</div>
<div class="a" style="left:33.5px;top:525.099px;width:192.5px;height:0.8px;background:#e3e3e3;"></div>
<div class="t f" id="f58" style="left:39.5px;transform-origin:0 0;top:512.872px;font-size:8.8px;color:#1c1c1c;transform:scaleX(0.7354);direction:rtl;font-weight:bold;">چرخش</div>
<div class="t f" id="f59" style="left:126.3px;transform-origin:0 0;top:512.372px;font-size:9.6px;color:#111;transform:scaleX(0.9169);direction:rtl;">راه-2(180)</div>
<div class="a" style="left:33.5px;top:539.952px;width:192.5px;height:0.8px;background:#e3e3e3;"></div>
<div class="t f" id="f60" style="left:39.5px;transform-origin:0 0;top:527.725px;font-size:8.8px;color:#1c1c1c;transform:scaleX(0.6828);direction:rtl;font-weight:bold;">اجازه تا شدن</div>
<div class="t f" id="f61" style="left:126.3px;transform-origin:0 0;top:527.225px;font-size:9.6px;color:#111;transform:scaleX(0.8441);direction:rtl;">هيچ يک</div>
<div class="a" style="left:33.5px;top:554.804px;width:192.5px;height:0.8px;background:#e3e3e3;"></div>
<div class="t f" id="f62" style="left:39.5px;transform-origin:0 0;top:542.578px;font-size:8.8px;color:#1c1c1c;transform:scaleX(0.6682);direction:rtl;font-weight:bold;">شيب قطعه</div>
<svg class="a" style="left:20px;top:543.678px" width="9" height="9" viewBox="0 0 9 9"><rect x=".5" y=".5" width="7.5" height="7.5" fill="#fafafa" stroke="#a0a0a0" stroke-width=".9"/><path d="M2.3 4.25H6.2" stroke="#555" stroke-width=".9"/></svg>
<div class="t f" id="f63" style="left:126.3px;transform-origin:0 0;top:542.278px;font-size:10.6px;color:#111;transform:scaleX(0.8804);">0</div>
<div class="a" style="left:33.5px;top:569.658px;width:192.5px;height:0.8px;background:#e3e3e3;"></div>
<div class="t f" id="f64" style="left:51px;transform-origin:0 0;top:557.431px;font-size:8.8px;color:#1c1c1c;transform:scaleX(0.7047);direction:rtl;font-weight:bold;">شيب خلاف جهت عقربه</div>
<div class="t f" id="f65" style="left:126.3px;transform-origin:0 0;top:556.931px;font-size:9.6px;color:#111;transform:scaleX(0.8464);direction:rtl;">درجه 0</div>
<div class="a" style="left:33.5px;top:584.511px;width:192.5px;height:0.8px;background:#e3e3e3;"></div>
<div class="t f" id="f66" style="left:51px;transform-origin:0 0;top:572.284px;font-size:8.8px;color:#1c1c1c;transform:scaleX(0.6926);direction:rtl;font-weight:bold;">شيب جهت عقربه</div>
<div class="t f" id="f67" style="left:126.3px;transform-origin:0 0;top:571.784px;font-size:9.6px;color:#111;transform:scaleX(0.8464);direction:rtl;">درجه 0</div>
<div class="a" style="left:33.5px;top:599.363px;width:192.5px;height:0.8px;background:#e3e3e3;"></div>
<div class="t f" id="f68" style="left:39.5px;transform-origin:0 0;top:587.137px;font-size:8.8px;color:#1c1c1c;transform:scaleX(0.7008);direction:rtl;font-weight:bold;">بهينه سازي نسبي</div>
<div class="a" style="left:127px;top:587.237px;width:10.5px;height:10.5px;background:#ffffff;border:1px solid #9a9a9a"></div>
<div class="a" style="left:19px;top:599.863px;width:207px;height:14.853px;background:#e6e6e6;"></div>
<div class="t f" id="f69" style="left:38px;transform-origin:0 0;top:602.19px;font-size:9.3px;color:#111;transform:scaleX(0.6492);direction:rtl;font-weight:bold;">ويژگي هاي ماكر</div>
<svg class="a" style="left:20px;top:603.09px" width="9" height="9" viewBox="0 0 9 9"><rect x=".5" y=".5" width="7.5" height="7.5" fill="#fafafa" stroke="#a0a0a0" stroke-width=".9"/><path d="M2.3 4.25H6.2 M4.25 2.3V6.2" stroke="#555" stroke-width=".9"/></svg>
<div class="a" style="left:19px;top:614.716px;width:207px;height:14.853px;background:#e6e6e6;"></div>
<div class="t f" id="f70" style="left:38px;transform-origin:0 0;top:617.043px;font-size:9.3px;color:#111;transform:scaleX(0.6885);direction:rtl;font-weight:bold;">اطلاعات سايزها</div>
<svg class="a" style="left:20px;top:617.943px" width="9" height="9" viewBox="0 0 9 9"><rect x=".5" y=".5" width="7.5" height="7.5" fill="#fafafa" stroke="#a0a0a0" stroke-width=".9"/><path d="M2.3 4.25H6.2 M4.25 2.3V6.2" stroke="#555" stroke-width=".9"/></svg>
<div class="a" style="left:19px;top:629.569px;width:207px;height:14.853px;background:#e6e6e6;"></div>
<div class="t f" id="f71" style="left:38px;transform-origin:0 0;top:631.896px;font-size:9.3px;color:#111;transform:scaleX(0.6756);direction:rtl;font-weight:bold;">گزارش</div>
<svg class="a" style="left:20px;top:632.796px" width="9" height="9" viewBox="0 0 9 9"><rect x=".5" y=".5" width="7.5" height="7.5" fill="#fafafa" stroke="#a0a0a0" stroke-width=".9"/><path d="M2.3 4.25H6.2 M4.25 2.3V6.2" stroke="#555" stroke-width=".9"/></svg>
<div class="a" style="left:19px;top:644.423px;width:207.5px;height:104.577px;background:#f1f1f1;"></div>
<div class="a" style="left:20px;top:748.5px;width:205px;height:1px;background:#c9c9c9;"></div>
<div class="a" style="left:19px;top:749.5px;width:207.5px;height:50.5px;background:#ebebeb;"></div>
<div class="a" style="left:226px;top:85px;width:2.5px;height:83px;background:#6d6d6d;"></div>
<div class="a" style="left:228.5px;top:85px;width:1269.5px;height:20px;background:#aaaaaa;"></div>
<div class="a" style="left:231px;top:88.5px;width:2px;height:13px;background:repeating-linear-gradient(#333 0 1.4px,transparent 1.4px 2.8px)"></div>
<div class="t f" id="f72" style="left:239.2px;transform-origin:0 0;top:89px;font-size:10.5px;color:#5f5f5f;transform:scaleX(0.8340);direction:rtl;">پنجره قطعات</div>
<svg class="a" style="left:1470px;top:88px" width="26" height="14" viewBox="0 0 26 14"><path d="M5 2.5H8V6.5H5Z M4 6.7H9 M6.5 6.7V10" fill="none" stroke="#333" stroke-width="1"/><path d="M16.5 4L22.5 10M22.5 4L16.5 10" stroke="#333" stroke-width="1.1"/></svg>
<div class="a" style="left:228.5px;top:105px;width:1269.5px;height:63px;background:#ebebeb;"></div>
<div class="a" style="left:1485px;top:105px;width:13px;height:63px;background:#f1f1f1;"></div>
<div class="a" style="left:1485.5px;top:118.4px;width:12px;height:33.5px;background:#c9c9c9;"></div>
<svg class="a" style="left:1485px;top:105px" width="13" height="63" viewBox="0 0 13 63"><path d="M3.5 8.5L6.5 5.5L9.5 8.5M3.5 54.5L6.5 57.5L9.5 54.5" fill="none" stroke="#444" stroke-width="1.3"/></svg>
<div class="a" style="left:231.3px;top:105.3px;width:42px;height:40px;background:#5eadff;border:2px solid #1b7fe0"></div>
<div class="a" style="left:243px;top:146px;width:18px;height:11.5px;background:#1a7fd6;"></div>
<div class="t f" id="f73" style="left:245px;transform-origin:0 0;top:148px;font-size:8.3px;color:#fff;transform:scaleX(0.9190);">pish</div>
<svg class="a" style="left:232px;top:106.7px" width="40" height="36" viewBox="-20 -18 40 36"><g transform="scale(1)"><path d="M-8 -3.5C-4 -3,-1 -3,2.5 -4C2.7 -2.5,3.2 -1.7,4 -1.5H7.5V4H-8Z" fill="#a9cbf0" stroke="#111" stroke-width="1"/></g></svg>
<div class="a" style="left:284.3px;top:106.5px;width:35.4px;height:36px;background:#e3e3e3;"></div>
<div class="t f" id="f74" style="left:292px;transform-origin:0 0;top:147.5px;font-size:8.3px;color:#222;transform:scaleX(0.9854);">posht</div>
<svg class="a" style="left:282px;top:106.7px" width="40" height="36" viewBox="-20 -18 40 36"><g transform="scale(1)"><path d="M-8.5 -6.5C-4 -5.5,1 -5.5,4 -6.5C4.2 -4.8,4.8 -4.3,5.6 -4H8L8.5 -2C7.5 -1.5,7.5 1.5,8.5 2L8 4H5.6C4.8 4.3,4.2 4.8,4 6.5C1 5.5,-4 5.5,-8.5 6.5Q-9 0 -8.5 -6.5Z" fill="#d0d0d0" stroke="#111" stroke-width="1"/></g></svg>
<div class="a" style="left:334.3px;top:106.5px;width:35.4px;height:36px;background:#e3e3e3;"></div>
<div class="t f" id="f75" style="left:338.75px;transform-origin:0 0;top:147.5px;font-size:8.3px;color:#222;transform:scaleX(0.9849);">FILTAB</div>
<svg class="a" style="left:332px;top:106.7px" width="40" height="36" viewBox="-20 -18 40 36"><g transform="scale(1)"><path d="M0 -2V2" stroke="#111" stroke-width="1.3"/></g></svg>
<div class="a" style="left:384.3px;top:106.5px;width:35.4px;height:36px;background:#e3e3e3;"></div>
<div class="t f" id="f76" style="left:393.25px;transform-origin:0 0;top:147.5px;font-size:8.3px;color:#222;transform:scaleX(0.9982);">astin</div>
<svg class="a" style="left:382px;top:106.7px" width="40" height="36" viewBox="-20 -18 40 36"><g transform="scale(1)"><path d="M-6.5 -1.5L4 -3C6 -2.5,6.5 -1,6.5 0.5L5.5 3H-6.5Z" fill="#d0d0d0" stroke="#111" stroke-width="1"/><path d="M-5 0.7H4" stroke="#555" stroke-width=".5"/></g></svg>
<div class="a" style="left:434.3px;top:106.5px;width:35.4px;height:36px;background:#e3e3e3;"></div>
<div class="t f" id="f77" style="left:445px;transform-origin:0 0;top:147.5px;font-size:8.3px;color:#222;transform:scaleX(0.9190);">pish</div>
<svg class="a" style="left:432px;top:106.7px" width="40" height="36" viewBox="-20 -18 40 36"><g transform="scale(1)"><path d="M-4 -1.8C-3 -1.5,-2 -1.6,-1 -2.2C-0.8 -1,0 -0.5,0.5 -0.5H3L4 2L3 2.8H-3C-4 2.8,-4 2,-4 1.5Z" fill="#d0d0d0" stroke="#111" stroke-width="1"/></g></svg>
<div class="a" style="left:484.3px;top:106.5px;width:35.4px;height:36px;background:#e3e3e3;"></div>
<div class="t f" id="f78" style="left:490.25px;transform-origin:0 0;top:147.5px;font-size:8.3px;color:#222;transform:scaleX(1.0394);">yaghe</div>
<svg class="a" style="left:482px;top:106.7px" width="40" height="36" viewBox="-20 -18 40 36"><g transform="scale(0.78)"><path d="M2.5 -7.5L3.5 -5.5C0.5 -3,0.5 3,3.5 5.5L2.5 7.5C-2.5 5,-2.5 -5,2.5 -7.5Z" fill="#d0d0d0" stroke="#111" stroke-width="1"/></g></svg>
<div class="a" style="left:534.3px;top:106.5px;width:35.4px;height:36px;background:#e3e3e3;"></div>
<div class="t f" id="f79" style="left:542.75px;transform-origin:0 0;top:147.5px;font-size:8.3px;color:#222;transform:scaleX(1.0553);">sejaf</div>
<svg class="a" style="left:532px;top:106.7px" width="40" height="36" viewBox="-20 -18 40 36"><g transform="scale(0.78)"><path d="M-8 -2.2C-3 -2,2 -2,7.5 -3L8 -1.8L6.8 -0.8V2.8L-1 2.2H-8Z" fill="#d0d0d0" stroke="#111" stroke-width="1"/></g></svg>
<div class="a" style="left:584.3px;top:106.5px;width:35.4px;height:36px;background:#e3e3e3;"></div>
<div class="t f" id="f80" style="left:592.75px;transform-origin:0 0;top:147.5px;font-size:8.3px;color:#222;transform:scaleX(1.0553);">sejaf</div>
<svg class="a" style="left:582px;top:106.7px" width="40" height="36" viewBox="-20 -18 40 36"><g transform="scale(0.78)"><path d="M1 -3.5L2 -2.5C0.5 -1,0.5 1,2 2.5L1 3.5H-1.5V-3.5Z" fill="#d0d0d0" stroke="#111" stroke-width="1"/></g></svg>
<div class="a" style="left:634.3px;top:106.5px;width:35.4px;height:36px;background:#e3e3e3;"></div>
<div class="t f" id="f81" style="left:643.25px;transform-origin:0 0;top:147.5px;font-size:8.3px;color:#222;transform:scaleX(0.9982);">astin</div>
<svg class="a" style="left:632px;top:106.7px" width="40" height="36" viewBox="-20 -18 40 36"><g transform="scale(0.78)"><path d="M-7 -3L8 -1.5C6 -0.8,5.5 0,5 0.8L5.3 2.8C1 2,-4 1.5,-7 1.2Z" fill="#d0d0d0" stroke="#111" stroke-width="1"/></g></svg>
<div class="a" style="left:684.3px;top:106.5px;width:35.4px;height:36px;background:#e3e3e3;"></div>
<div class="t f" id="f82" style="left:688.25px;transform-origin:0 0;top:147.5px;font-size:8.3px;color:#222;transform:scaleX(0.9932);">neghab</div>
<svg class="a" style="left:682px;top:106.7px" width="40" height="36" viewBox="-20 -18 40 36"><g transform="scale(1)"><path d="M0 -1.5V1.5" stroke="#111" stroke-width="1.2"/></g></svg>
<div class="a" style="left:734.3px;top:106.5px;width:35.4px;height:36px;background:#e3e3e3;"></div>
<div class="t f" id="f83" style="left:740.5px;transform-origin:0 0;top:147.5px;font-size:8.3px;color:#222;transform:scaleX(0.9966);">pagon</div>
<svg class="a" style="left:732px;top:106.7px" width="40" height="36" viewBox="-20 -18 40 36"><g transform="scale(1)"><path d="M0 -4V4" stroke="#111" stroke-width="1.3"/></g></svg>
<div class="a" style="left:784.3px;top:106.5px;width:35.4px;height:36px;background:#e3e3e3;"></div>
<div class="t f" id="f84" style="left:789.25px;transform-origin:0 0;top:147.5px;font-size:8.3px;color:#222;transform:scaleX(0.9697);">POL++</div>
<svg class="a" style="left:782px;top:106.7px" width="40" height="36" viewBox="-20 -18 40 36"><g transform="scale(1)"><path d="M0 -4V4" stroke="#111" stroke-width="1.3"/></g></svg>
<div class="a" style="left:834.3px;top:106.5px;width:35.4px;height:36px;background:#e3e3e3;"></div>
<div class="t f" id="f85" style="left:833.5px;transform-origin:0 0;top:147.5px;font-size:8.3px;color:#222;transform:scaleX(1.0247);">@neghab</div>
<svg class="a" style="left:832px;top:106.7px" width="40" height="36" viewBox="-20 -18 40 36"><g transform="scale(1)"><path d="M0 -1.5V1.5" stroke="#111" stroke-width="1.2"/></g></svg>
<div class="a" style="left:884.3px;top:106.5px;width:35.4px;height:36px;background:#e3e3e3;"></div>
<div class="t f" id="f86" style="left:886px;transform-origin:0 0;top:147.5px;font-size:8.3px;color:#222;transform:scaleX(1.0159);">@pagon</div>
<svg class="a" style="left:882px;top:106.7px" width="40" height="36" viewBox="-20 -18 40 36"><g transform="scale(1)"><path d="M0 -4V4" stroke="#111" stroke-width="1.3"/></g></svg>
<div class="a" style="left:934.3px;top:106.5px;width:35.4px;height:36px;background:#e3e3e3;"></div>
<div class="t f" id="f87" style="left:938.75px;transform-origin:0 0;top:147.5px;font-size:8.3px;color:#222;transform:scaleX(0.9849);">FILTAB</div>
<svg class="a" style="left:932px;top:106.7px" width="40" height="36" viewBox="-20 -18 40 36"><g transform="scale(1)"><path d="M0 -2V2" stroke="#111" stroke-width="1.2"/></g></svg>
<div class="a" style="left:984.3px;top:106.5px;width:35.4px;height:36px;background:#e3e3e3;"></div>
<div class="t f" id="f88" style="left:979.75px;transform-origin:0 0;top:147.5px;font-size:8.3px;color:#222;transform:scaleX(0.9717);">ZYR FILTAB</div>
<svg class="a" style="left:982px;top:106.7px" width="40" height="36" viewBox="-20 -18 40 36"><g transform="scale(1)"><path d="M0 -2V2" stroke="#111" stroke-width="1.2"/></g></svg>
<div class="a" style="left:1034.3px;top:106.5px;width:35.4px;height:36px;background:#e3e3e3;"></div>
<div class="t f" id="f89" style="left:1037.5px;transform-origin:0 0;top:147.5px;font-size:8.3px;color:#222;transform:scaleX(0.9825);">KAMAR</div>
<div class="t f" id="f90" style="left:1038.5px;transform-origin:0 0;top:157.5px;font-size:8.3px;color:#222;transform:scaleX(0.9443);">BANED</div>
<svg class="a" style="left:1032px;top:106.7px" width="40" height="36" viewBox="-20 -18 40 36"><g transform="scale(1)"><rect x="-1.3" y="-14.5" width="2.6" height="29" fill="#d0d0d0" stroke="#111" stroke-width="1"/></g></svg>
<div class="a" style="left:227px;top:168px;width:1271px;height:632px;background:#ffffff;"></div>
<div class="a" style="left:227px;top:168px;width:1271px;height:13px;background:#000000;"></div>
<div class="a" style="left:227px;top:168px;width:12px;height:632px;background:#000000;"></div>
<svg class="a" style="left:0;top:0" width="1500" height="844" viewBox="0 0 1500 844"><path d="M244.0 178.8V181M250.7 177.0V181M257.4 178.8V181M264.2 178.8V181M270.9 178.8V181M277.7 178.8V181M284.4 174.5V181M291.1 178.8V181M297.9 178.8V181M304.6 178.8V181M311.4 178.8V181M318.1 177.0V181M324.8 178.8V181M331.6 178.8V181M338.3 178.8V181M345.1 178.8V181M351.8 174.5V181M358.5 178.8V181M365.3 178.8V181M372.0 178.8V181M378.8 178.8V181M385.5 177.0V181M392.2 178.8V181M399.0 178.8V181M405.7 178.8V181M412.5 178.8V181M419.2 174.5V181M425.9 178.8V181M432.7 178.8V181M439.4 178.8V181M446.2 178.8V181M452.9 177.0V181M459.6 178.8V181M466.4 178.8V181M473.1 178.8V181M479.9 178.8V181M486.6 174.5V181M493.3 178.8V181M500.1 178.8V181M506.8 178.8V181M513.6 178.8V181M520.3 177.0V181M527.0 178.8V181M533.8 178.8V181M540.5 178.8V181M547.3 178.8V181M554.0 174.5V181M560.7 178.8V181M567.5 178.8V181M574.2 178.8V181M581.0 178.8V181M587.7 177.0V181M594.4 178.8V181M601.2 178.8V181M607.9 178.8V181M614.7 178.8V181M621.4 174.5V181M628.1 178.8V181M634.9 178.8V181M641.6 178.8V181M648.4 178.8V181M655.1 177.0V181M661.8 178.8V181M668.6 178.8V181M675.3 178.8V181M682.1 178.8V181M688.8 174.5V181M695.5 178.8V181M702.3 178.8V181M709.0 178.8V181M715.8 178.8V181M722.5 177.0V181M729.2 178.8V181M736.0 178.8V181M742.7 178.8V181M749.5 178.8V181M756.2 174.5V181M762.9 178.8V181M769.7 178.8V181M776.4 178.8V181M783.2 178.8V181M789.9 177.0V181M796.6 178.8V181M803.4 178.8V181M810.1 178.8V181M816.9 178.8V181M823.6 171.0V181M830.3 178.8V181M837.1 178.8V181M843.8 178.8V181M850.6 178.8V181M857.3 177.0V181M864.0 178.8V181M870.8 178.8V181M877.5 178.8V181M884.3 178.8V181M891.0 174.5V181M897.7 178.8V181M904.5 178.8V181M911.2 178.8V181M918.0 178.8V181M924.7 177.0V181M931.4 178.8V181M938.2 178.8V181M944.9 178.8V181M951.7 178.8V181M958.4 174.5V181M965.1 178.8V181M971.9 178.8V181M978.6 178.8V181M985.4 178.8V181M992.1 177.0V181M998.8 178.8V181M1005.6 178.8V181M1012.3 178.8V181M1019.1 178.8V181M1025.8 174.5V181M1032.5 178.8V181M1039.3 178.8V181M1046.0 178.8V181M1052.8 178.8V181M1059.5 177.0V181M1066.2 178.8V181M1073.0 178.8V181M1079.7 178.8V181M1086.5 178.8V181M1093.2 174.5V181M1099.9 178.8V181M1106.7 178.8V181M1113.4 178.8V181M1120.2 178.8V181M1126.9 177.0V181M1133.6 178.8V181M1140.4 178.8V181M1147.1 178.8V181M1153.9 178.8V181M1160.6 174.5V181M1167.3 178.8V181M1174.1 178.8V181M1180.8 178.8V181M1187.6 178.8V181M1194.3 177.0V181M1201.0 178.8V181M1207.8 178.8V181M1214.5 178.8V181M1221.3 178.8V181M1228.0 174.5V181M1234.7 178.8V181M1241.5 178.8V181M1248.2 178.8V181M1255.0 178.8V181M1261.7 177.0V181M1268.4 178.8V181M1275.2 178.8V181M1281.9 178.8V181M1288.7 178.8V181M1295.4 174.5V181M1302.1 178.8V181M1308.9 178.8V181M1315.6 178.8V181M1322.4 178.8V181M1329.1 177.0V181M1335.8 178.8V181M1342.6 178.8V181M1349.3 178.8V181M1356.1 178.8V181M1362.8 174.5V181M1369.5 178.8V181M1376.3 178.8V181M1383.0 178.8V181M1389.8 178.8V181M1396.5 177.0V181M1403.2 178.8V181M1410.0 178.8V181M1416.7 178.8V181M1423.5 178.8V181M1430.2 174.5V181M1436.9 178.8V181M1443.7 178.8V181M1450.4 178.8V181M1457.2 178.8V181M1463.9 177.0V181M1470.6 178.8V181M1477.4 178.8V181M1484.1 178.8V181M1490.9 178.8V181" stroke="#fff" stroke-width="1" fill="none"/><path d="M236.8 794.0H239M236.8 787.3H239M236.8 780.6H239M232.5 773.8H239M236.8 767.1H239M236.8 760.4H239M236.8 753.7H239M236.8 747.0H239M235.0 740.3H239M236.8 733.5H239M236.8 726.8H239M236.8 720.1H239M236.8 713.4H239M232.5 706.7H239M236.8 700.0H239M236.8 693.2H239M236.8 686.5H239M236.8 679.8H239M235.0 673.1H239M236.8 666.4H239M236.8 659.7H239M236.8 653.0H239M236.8 646.2H239M232.5 639.5H239M236.8 632.8H239M236.8 626.1H239M236.8 619.4H239M236.8 612.7H239M235.0 605.9H239M236.8 599.2H239M236.8 592.5H239M236.8 585.8H239M236.8 579.1H239M232.5 572.4H239M236.8 565.6H239M236.8 558.9H239M236.8 552.2H239M236.8 545.5H239M235.0 538.8H239M236.8 532.1H239M236.8 525.3H239M236.8 518.6H239M236.8 511.9H239M229.0 505.2H239M236.8 498.5H239M236.8 491.8H239M236.8 485.1H239M236.8 478.3H239M235.0 471.6H239M236.8 464.9H239M236.8 458.2H239M236.8 451.5H239M236.8 444.8H239M232.5 438.0H239M236.8 431.3H239M236.8 424.6H239M236.8 417.9H239M236.8 411.2H239M235.0 404.5H239M236.8 397.7H239M236.8 391.0H239M236.8 384.3H239M236.8 377.6H239M232.5 370.9H239M236.8 364.2H239M236.8 357.4H239M236.8 350.7H239M236.8 344.0H239M235.0 337.3H239M236.8 330.6H239M236.8 323.9H239M236.8 317.2H239M236.8 310.4H239M232.5 303.7H239M236.8 297.0H239M236.8 290.3H239M236.8 283.6H239M236.8 276.9H239M235.0 270.1H239M236.8 263.4H239M236.8 256.7H239M236.8 250.0H239M236.8 243.3H239M232.5 236.6H239M236.8 229.8H239M236.8 223.1H239M236.8 216.4H239M236.8 209.7H239M235.0 203.0H239M236.8 196.3H239M236.8 189.5H239M236.8 182.8H239" stroke="#fff" stroke-width="1" fill="none"/><text x="286.0" y="177.3" font-size="8.4" fill="#f4f4f4" font-family="Liberation Sans">-160</text><text x="353.4" y="177.3" font-size="8.4" fill="#f4f4f4" font-family="Liberation Sans">-140</text><text x="420.8" y="177.3" font-size="8.4" fill="#f4f4f4" font-family="Liberation Sans">-120</text><text x="488.2" y="177.3" font-size="8.4" fill="#f4f4f4" font-family="Liberation Sans">-100</text><text x="555.6" y="177.3" font-size="8.4" fill="#f4f4f4" font-family="Liberation Sans">-80</text><text x="623.0" y="177.3" font-size="8.4" fill="#f4f4f4" font-family="Liberation Sans">-60</text><text x="690.4" y="177.3" font-size="8.4" fill="#f4f4f4" font-family="Liberation Sans">-40</text><text x="757.8" y="177.3" font-size="8.4" fill="#f4f4f4" font-family="Liberation Sans">-20</text><text x="825.2" y="177.3" font-size="8.4" fill="#f4f4f4" font-family="Liberation Sans">0</text><text x="892.6" y="177.3" font-size="8.4" fill="#f4f4f4" font-family="Liberation Sans">20</text><text x="960.0" y="177.3" font-size="8.4" fill="#f4f4f4" font-family="Liberation Sans">40</text><text x="1027.4" y="177.3" font-size="8.4" fill="#f4f4f4" font-family="Liberation Sans">60</text><text x="1094.8" y="177.3" font-size="8.4" fill="#f4f4f4" font-family="Liberation Sans">80</text><text x="1162.2" y="177.3" font-size="8.4" fill="#f4f4f4" font-family="Liberation Sans">100</text><text x="1229.6" y="177.3" font-size="8.4" fill="#f4f4f4" font-family="Liberation Sans">120</text><text x="1297.0" y="177.3" font-size="8.4" fill="#f4f4f4" font-family="Liberation Sans">140</text><text x="1364.4" y="177.3" font-size="8.4" fill="#f4f4f4" font-family="Liberation Sans">160</text><text x="1431.8" y="177.3" font-size="8.4" fill="#f4f4f4" font-family="Liberation Sans">180</text><text transform="translate(235.8,772.2) rotate(-90)" font-size="8.4" fill="#f4f4f4" font-family="Liberation Sans">-80</text><text transform="translate(235.8,705.1) rotate(-90)" font-size="8.4" fill="#f4f4f4" font-family="Liberation Sans">-60</text><text transform="translate(235.8,637.9) rotate(-90)" font-size="8.4" fill="#f4f4f4" font-family="Liberation Sans">-40</text><text transform="translate(235.8,570.8) rotate(-90)" font-size="8.4" fill="#f4f4f4" font-family="Liberation Sans">-20</text><text transform="translate(235.8,503.6) rotate(-90)" font-size="8.4" fill="#f4f4f4" font-family="Liberation Sans">0</text><text transform="translate(235.8,436.4) rotate(-90)" font-size="8.4" fill="#f4f4f4" font-family="Liberation Sans">20</text><text transform="translate(235.8,369.3) rotate(-90)" font-size="8.4" fill="#f4f4f4" font-family="Liberation Sans">40</text><text transform="translate(235.8,302.1) rotate(-90)" font-size="8.4" fill="#f4f4f4" font-family="Liberation Sans">60</text><text transform="translate(235.8,235.0) rotate(-90)" font-size="8.4" fill="#f4f4f4" font-family="Liberation Sans">80</text><path d="M1002.3 169V181" stroke="#fff" stroke-width="1" stroke-dasharray="2 1.5"/></svg>
<svg class="a" style="left:0;top:0" width="1500" height="844" viewBox="0 0 1500 844" font-family="Liberation Sans"><path d="M412.3 235H452V730H412.3Z" fill="#c0c0c0" stroke="#000" stroke-width="1"/><circle cx="412.3" cy="235.0" r="2.3" fill="#000"/><circle cx="452.0" cy="235.0" r="2.3" fill="#000"/><circle cx="412.3" cy="730.0" r="2.3" fill="#000"/><circle cx="452.0" cy="730.0" r="2.3" fill="#000"/><path d="M420.0 482.0H446.0 M420.0 482.0l3 -1.6 M420.0 482.0l3 1.6 M424.0 479.5v5" fill="none" stroke="#000" stroke-width="1"/><path d="M488.6 267.4 C540 272,590 282.5,620 282.3 C640 282,655 279,668.7 276.3 C670 288,676 296,684.6 299.6 L741 296.9 L757.2 339.4 C745 345,745 360,747 365.9 C745 372,745 387,757.2 392.4 L741 434.9 L684.6 432.2 C676 436,670 444,668.7 456.1 C655 453.5,640 450.5,620 450 C590 450,540 460,488.6 464.7 Q475.5 366 488.6 267.4Z" fill="#c0c0c0" stroke="#000" stroke-width="1"/><path d="M488.6 256.9 C540 261.5,590 272.0,620 271.8 C640 271.5,655 269.0,665.6 266.9" fill="none" stroke="#e0622a" stroke-width="1"/><path d="M488.6 475.2 C540 470.5,590 460.5,620 460.5 C640 461.0,655 463.5,665.6 465.6" fill="none" stroke="#e0622a" stroke-width="1"/><circle cx="488.6" cy="256.9" r="2.1" fill="#e0622a"/><circle cx="665.6" cy="266.9" r="2.1" fill="#e0622a"/><circle cx="488.6" cy="475.2" r="2.1" fill="#e0622a"/><circle cx="665.6" cy="465.6" r="2.1" fill="#e0622a"/><path d="M687.0 296.7 L741.0 294.0" fill="none" stroke="#e0622a" stroke-width="1"/><path d="M687.0 435.1 L741.0 437.8" fill="none" stroke="#e0622a" stroke-width="1"/><circle cx="687.0" cy="296.7" r="2.1" fill="#e0622a"/><circle cx="741.0" cy="294.0" r="2.1" fill="#e0622a"/><circle cx="687.0" cy="435.1" r="2.1" fill="#e0622a"/><circle cx="741.0" cy="437.8" r="2.1" fill="#e0622a"/><path d="M488.6 261.9 C540 266.5,590 277.0,620 276.8 C640 276.5,655 273.8,667.1 271.4" fill="none" stroke="#3aa82f" stroke-width="1"/><path d="M488.6 470.2 C540 465.5,590 455.5,620 455.5 C640 456.0,655 458.7,667.1 461.1" fill="none" stroke="#3aa82f" stroke-width="1"/><circle cx="488.6" cy="261.9" r="2.1" fill="#3aa82f"/><circle cx="667.1" cy="271.4" r="2.1" fill="#3aa82f"/><circle cx="488.6" cy="470.2" r="2.1" fill="#3aa82f"/><circle cx="667.1" cy="461.1" r="2.1" fill="#3aa82f"/><path d="M685.8 298.1 L741.0 295.4" fill="none" stroke="#3aa82f" stroke-width="1"/><path d="M685.8 433.7 L741.0 436.4" fill="none" stroke="#3aa82f" stroke-width="1"/><circle cx="685.8" cy="298.1" r="2.1" fill="#3aa82f"/><circle cx="741.0" cy="295.4" r="2.1" fill="#3aa82f"/><circle cx="685.8" cy="433.7" r="2.1" fill="#3aa82f"/><circle cx="741.0" cy="436.4" r="2.1" fill="#3aa82f"/><path d="M488.6 271.9 C540 276.5,590 287.0,620 286.8 C640 286.5,655 283.3,670.1 280.4" fill="none" stroke="#1f78c8" stroke-width="1"/><path d="M488.6 460.2 C540 455.5,590 445.5,620 445.5 C640 446.0,655 449.2,670.1 452.1" fill="none" stroke="#1f78c8" stroke-width="1"/><circle cx="488.6" cy="271.9" r="2.1" fill="#1f78c8"/><circle cx="670.1" cy="280.4" r="2.1" fill="#1f78c8"/><circle cx="488.6" cy="460.2" r="2.1" fill="#1f78c8"/><circle cx="670.1" cy="452.1" r="2.1" fill="#1f78c8"/><path d="M683.6 300.9 L741.0 298.2" fill="none" stroke="#1f78c8" stroke-width="1"/><path d="M683.6 430.9 L741.0 433.6" fill="none" stroke="#1f78c8" stroke-width="1"/><circle cx="683.6" cy="300.9" r="2.1" fill="#1f78c8"/><circle cx="741.0" cy="298.2" r="2.1" fill="#1f78c8"/><circle cx="683.6" cy="430.9" r="2.1" fill="#1f78c8"/><circle cx="741.0" cy="433.6" r="2.1" fill="#1f78c8"/><path d="M488.6 277 Q477 366 488.6 455" fill="none" stroke="#1f78c8" stroke-width="1"/><circle cx="488.6" cy="267.4" r="2.3" fill="#000"/><circle cx="481.9" cy="365.9" r="2.3" fill="#000"/><circle cx="488.6" cy="464.7" r="2.3" fill="#000"/><circle cx="668.7" cy="276.3" r="2.3" fill="#000"/><circle cx="684.6" cy="299.6" r="2.3" fill="#000"/><circle cx="741.0" cy="296.9" r="2.3" fill="#000"/><circle cx="757.2" cy="339.4" r="2.3" fill="#000"/><circle cx="747.0" cy="365.9" r="2.3" fill="#000"/><circle cx="757.2" cy="392.4" r="2.3" fill="#000"/><circle cx="741.0" cy="434.9" r="2.3" fill="#000"/><circle cx="684.6" cy="432.2" r="2.3" fill="#000"/><circle cx="668.7" cy="456.1" r="2.3" fill="#000"/><path d="M534.0 365.9H694.0 M534.0 365.9l16.0 6.4 M694.0 365.9l-16.0 -6.4 M557.5 346.9V384.9" fill="none" stroke="#000" stroke-width="1"/><text x="594.5" y="361" font-size="16.6">posht</text><path d="M490.2 509.1 C530 512,595 524,625 524.7 C645 525,660 522,671 519.8 C672 533,677 541,684.2 545.6 L732.3 543.6 L750.6 586.1 C742 590,734 593,730.7 597.7 C727 605,727 611,726.7 616.9 L725.7 643.5 C690 640,640 636,610.6 630.9 L483.9 630.9 C484 590,486 550,490.2 509.1Z" fill="#c0c0c0" stroke="#000" stroke-width="1"/><path d="M490.2 499.1 C530 502.0,595 514.0,625 514.7 C645 515.0,660 512.0,667.5 509.8" fill="none" stroke="#e0622a" stroke-width="1"/><circle cx="490.2" cy="499.1" r="2.1" fill="#e0622a"/><circle cx="667.5" cy="509.8" r="2.1" fill="#e0622a"/><path d="M686.6 542.6 L732.3 540.6" fill="none" stroke="#e0622a" stroke-width="1"/><circle cx="686.6" cy="542.6" r="2.1" fill="#e0622a"/><circle cx="732.3" cy="540.6" r="2.1" fill="#e0622a"/><path d="M490.2 504.1 C530 507.0,595 519.0,625 519.7 C645 520.0,660 517.0,669.2 514.8" fill="none" stroke="#3aa82f" stroke-width="1"/><circle cx="490.2" cy="504.1" r="2.1" fill="#3aa82f"/><circle cx="669.2" cy="514.8" r="2.1" fill="#3aa82f"/><path d="M685.4 544.1 L732.3 542.1" fill="none" stroke="#3aa82f" stroke-width="1"/><circle cx="685.4" cy="544.1" r="2.1" fill="#3aa82f"/><circle cx="732.3" cy="542.1" r="2.1" fill="#3aa82f"/><path d="M490.2 513.6 C530 516.5,595 528.5,625 529.2 C645 529.5,660 526.5,672.6 524.3" fill="none" stroke="#1f78c8" stroke-width="1"/><circle cx="490.2" cy="513.6" r="2.1" fill="#1f78c8"/><circle cx="672.6" cy="524.3" r="2.1" fill="#1f78c8"/><path d="M683.1 547.0 L732.3 545.0" fill="none" stroke="#1f78c8" stroke-width="1"/><circle cx="683.1" cy="547.0" r="2.1" fill="#1f78c8"/><circle cx="732.3" cy="545.0" r="2.1" fill="#1f78c8"/><path d="M490.5 516 C487 550,485.5 590,485 628" fill="none" stroke="#1f78c8" stroke-width="1"/><path d="M489.5 500 C486 550,484.5 590,484 630" fill="none" stroke="#e0622a" stroke-width="1"/><circle cx="490.2" cy="509.1" r="2.3" fill="#000"/><circle cx="483.9" cy="630.9" r="2.3" fill="#000"/><circle cx="610.6" cy="630.9" r="2.3" fill="#000"/><circle cx="725.7" cy="643.5" r="2.3" fill="#000"/><circle cx="726.7" cy="616.9" r="2.3" fill="#000"/><circle cx="730.7" cy="597.7" r="2.3" fill="#000"/><circle cx="750.6" cy="586.1" r="2.3" fill="#000"/><circle cx="732.3" cy="543.6" r="2.3" fill="#000"/><circle cx="684.2" cy="545.6" r="2.3" fill="#000"/><circle cx="671.0" cy="519.8" r="2.3" fill="#000"/><path d="M536.0 576.5H695.0 M536.0 576.5l16.0 6.4 M695.0 576.5l-16.0 -6.4 M559.5 557.5V595.5" fill="none" stroke="#000" stroke-width="1"/><text x="600" y="572" font-size="16.6">pish</text><circle cx="590.5" cy="535.5" r="2.0" fill="#e0622a"/><circle cx="591.0" cy="575.0" r="2.0" fill="#e0622a"/><circle cx="592.5" cy="537.0" r="1.8" fill="#1f4a6a"/><circle cx="593.0" cy="576.0" r="1.8" fill="#1f4a6a"/><rect x="472.3" y="487.6" width="289.2" height="166.5" fill="none" stroke="#222" stroke-width="1" stroke-dasharray="2 2"/><rect x="470.3" y="485.6" width="4" height="4" fill="#000"/><rect x="614.9" y="485.6" width="4" height="4" fill="#000"/><rect x="759.5" y="485.6" width="4" height="4" fill="#000"/><rect x="470.3" y="568.8" width="4" height="4" fill="#000"/><rect x="759.5" y="568.8" width="4" height="4" fill="#000"/><rect x="470.3" y="652.1" width="4" height="4" fill="#000"/><rect x="614.9" y="652.1" width="4" height="4" fill="#000"/><rect x="759.5" y="652.1" width="4" height="4" fill="#000"/><path d="M485.2 676.3 C560 677,640 678,745 653.1 L752.6 671.7 C745 675,737 679,733.7 683.9 C730 692,729.5 698,729 703.2 L728.4 729.4 C690 727,640 722,612.6 716.8 L485.2 716.8Z" fill="#c0c0c0" stroke="#000" stroke-width="1"/><circle cx="485.2" cy="676.3" r="2.3" fill="#000"/><circle cx="485.2" cy="716.8" r="2.3" fill="#000"/><circle cx="612.6" cy="716.8" r="2.3" fill="#000"/><circle cx="728.4" cy="729.4" r="2.3" fill="#000"/><circle cx="729.0" cy="703.2" r="2.3" fill="#000"/><circle cx="733.7" cy="683.9" r="2.3" fill="#000"/><circle cx="752.6" cy="671.7" r="2.3" fill="#000"/><circle cx="745.0" cy="653.1" r="2.3" fill="#000"/><path d="M533.0 691.0H682.0 M533.0 691.0l16.0 6.4 M682.0 691.0l-16.0 -6.4 M554.5 673.0V709.0" fill="none" stroke="#000" stroke-width="1"/><text x="590.5" y="687" font-size="16.6">sejaf</text><path d="M815.7 323.8 L823 341.7 C808 350,808 388,823 395.9 L815.7 413.7 C790 412,770 395,770 368.6 C770 342,790 326,815.7 323.8Z" fill="#c0c0c0" stroke="#000" stroke-width="1"/><circle cx="815.7" cy="323.8" r="2.3" fill="#000"/><circle cx="823.0" cy="341.7" r="2.3" fill="#000"/><circle cx="812.5" cy="368.6" r="2.3" fill="#000"/><circle cx="823.0" cy="395.9" r="2.3" fill="#000"/><circle cx="815.7" cy="413.7" r="2.3" fill="#000"/><circle cx="770.0" cy="368.6" r="2.3" fill="#000"/><path d="M779 368.6H805 M782 366v5.5 M808 366.5v4" fill="none" stroke="#000" stroke-width="1"/><path d="M839.9 294.8 L847.8 289.1 L855.8 294.8 V418.9 H839.9Z" fill="#c0c0c0" stroke="#000" stroke-width="1"/><circle cx="839.9" cy="294.8" r="2.3" fill="#000"/><circle cx="847.8" cy="289.1" r="2.3" fill="#000"/><circle cx="855.8" cy="294.8" r="2.3" fill="#000"/><circle cx="839.9" cy="418.9" r="2.3" fill="#000"/><circle cx="855.8" cy="418.9" r="2.3" fill="#000"/><path d="M842.9 354H852.8 M845.9 352v4" fill="none" stroke="#000" stroke-width="1"/><path d="M862.1 294.8 L870.3 289.1 L878.5 294.8 V418.9 H862.1Z" fill="#c0c0c0" stroke="#000" stroke-width="1"/><circle cx="862.1" cy="294.8" r="2.3" fill="#000"/><circle cx="870.3" cy="289.1" r="2.3" fill="#000"/><circle cx="878.5" cy="294.8" r="2.3" fill="#000"/><circle cx="862.1" cy="418.9" r="2.3" fill="#000"/><circle cx="878.5" cy="418.9" r="2.3" fill="#000"/><path d="M865.1 354H875.5 M868.1 352v4" fill="none" stroke="#000" stroke-width="1"/><path d="M892.3 300.3 L1051.5 276.1 C1075 290,1099 300,1099.8 323.5 C1099.5 345,1090 356,1078.9 366 C1020 369,950 364,895.2 361.5Z" fill="#c0c0c0" stroke="#000" stroke-width="1"/><path d="M892.3 298.8 L1048.2 270.1 C1077.4 284.0,1100.8 297.0,1099.8 323.5" fill="none" stroke="#e0622a" stroke-width="1"/><circle cx="1048.2" cy="270.1" r="2.1" fill="#e0622a"/><path d="M892.3 299.5 L1049.7 272.9 C1076.3 286.8,1100.0 298.4,1099.8 323.5" fill="none" stroke="#3aa82f" stroke-width="1"/><circle cx="1049.7" cy="272.9" r="2.1" fill="#3aa82f"/><path d="M892.3 300.9 L1052.7 278.3 C1074.1 292.2,1098.3 301.1,1099.8 323.5" fill="none" stroke="#1f78c8" stroke-width="1"/><circle cx="1052.7" cy="278.3" r="2.1" fill="#1f78c8"/><path d="M1078.9 366.6 C1020 369.6,950 364.6,896 362" fill="none" stroke="#1f78c8" stroke-width="1"/><circle cx="892.3" cy="300.3" r="2.3" fill="#000"/><circle cx="895.2" cy="361.5" r="2.3" fill="#000"/><circle cx="1051.5" cy="276.1" r="2.3" fill="#000"/><circle cx="1099.8" cy="323.5" r="2.3" fill="#000"/><circle cx="1078.9" cy="366.0" r="2.3" fill="#000"/><path d="M934.0 321.0H1058.0 M934.0 321.0l13.0 5.2 M1058.0 321.0l-13.0 -5.2 M951.0 306.0V336.0" fill="none" stroke="#000" stroke-width="1"/><text x="982" y="317.5" font-size="12.5">astin</text><path d="M898 369.9 L1091.9 390.2 C1075 398,1062 408,1053.6 415.5 L1059.6 438.4 C1000 428,940 419,895.2 413.7Z" fill="#c0c0c0" stroke="#000" stroke-width="1"/><path d="M895.2 415.1 C940 422.6,1000 435.2,1057.3 447.4 L1051.3 424.5 C1062 413.4,1075 400.7,1091.9 390.2" fill="none" stroke="#e0622a" stroke-width="1"/><circle cx="1057.3" cy="447.4" r="2.1" fill="#e0622a"/><circle cx="1051.3" cy="424.5" r="2.1" fill="#e0622a"/><path d="M895.2 414.4 C940 421.0,1000 432.0,1058.3 443.4 L1052.3 420.5 C1062 411.0,1075 399.5,1091.9 390.2" fill="none" stroke="#3aa82f" stroke-width="1"/><circle cx="1058.3" cy="443.4" r="2.1" fill="#3aa82f"/><circle cx="1052.3" cy="420.5" r="2.1" fill="#3aa82f"/><path d="M895.2 413.2 C940 417.8,1000 425.6,1060.3 435.4 L1054.3 412.5 C1062 406.2,1075 397.1,1091.9 390.2" fill="none" stroke="#1f78c8" stroke-width="1"/><circle cx="1060.3" cy="435.4" r="2.1" fill="#1f78c8"/><circle cx="1054.3" cy="412.5" r="2.1" fill="#1f78c8"/><circle cx="898.0" cy="369.9" r="2.3" fill="#000"/><circle cx="895.2" cy="413.7" r="2.3" fill="#000"/><circle cx="1091.9" cy="390.2" r="2.3" fill="#000"/><circle cx="1053.6" cy="415.5" r="2.3" fill="#000"/><circle cx="1059.6" cy="438.4" r="2.3" fill="#000"/><path d="M929.0 403.5H1031.0 M929.0 403.5l12.0 4.8 M1031.0 403.5l-12.0 -4.8 M944.5 391.5V415.5" fill="none" stroke="#000" stroke-width="1"/><text x="968" y="402" font-size="12.5">astin</text><path d="M765.2 468.4 C780 468,795 466.5,809.5 464.6 C811 477,817 486,828.5 489.3 L872.1 488.2 L889.6 529.9 L868.3 545 H790 C772 545,765.2 535,765.2 521.5Z" fill="#c0c0c0" stroke="#000" stroke-width="1"/><path d="M765.2 458.4 C780 458.0,795 456.5,807.0 454.6" fill="none" stroke="#e0622a" stroke-width="1"/><circle cx="765.2" cy="458.4" r="2.1" fill="#e0622a"/><circle cx="807.0" cy="454.6" r="2.1" fill="#e0622a"/><path d="M830.6 486.3 L872.1 485.2" fill="none" stroke="#e0622a" stroke-width="1"/><circle cx="830.6" cy="486.3" r="2.1" fill="#e0622a"/><circle cx="872.1" cy="485.2" r="2.1" fill="#e0622a"/><path d="M765.2 463.4 C780 463.0,795 461.5,808.2 459.6" fill="none" stroke="#3aa82f" stroke-width="1"/><circle cx="765.2" cy="463.4" r="2.1" fill="#3aa82f"/><circle cx="808.2" cy="459.6" r="2.1" fill="#3aa82f"/><path d="M829.5 487.8 L872.1 486.7" fill="none" stroke="#3aa82f" stroke-width="1"/><circle cx="829.5" cy="487.8" r="2.1" fill="#3aa82f"/><circle cx="872.1" cy="486.7" r="2.1" fill="#3aa82f"/><path d="M765.2 472.9 C780 472.5,795 471.0,810.6 469.1" fill="none" stroke="#1f78c8" stroke-width="1"/><circle cx="765.2" cy="472.9" r="2.1" fill="#1f78c8"/><circle cx="810.6" cy="469.1" r="2.1" fill="#1f78c8"/><path d="M827.6 490.7 L872.1 489.6" fill="none" stroke="#1f78c8" stroke-width="1"/><circle cx="827.6" cy="490.7" r="2.1" fill="#1f78c8"/><circle cx="872.1" cy="489.6" r="2.1" fill="#1f78c8"/><circle cx="765.2" cy="468.4" r="2.3" fill="#000"/><circle cx="765.2" cy="521.5" r="2.3" fill="#000"/><circle cx="868.3" cy="545.0" r="2.3" fill="#000"/><circle cx="889.6" cy="529.9" r="2.3" fill="#000"/><circle cx="872.1" cy="488.2" r="2.3" fill="#000"/><circle cx="828.5" cy="489.3" r="2.3" fill="#000"/><circle cx="809.5" cy="464.6" r="2.3" fill="#000"/><path d="M787.0 504.5H857.0 M787.0 504.5l7.0 2.8 M857.0 504.5l-7.0 -2.8 M797.0 496.5V512.5" fill="none" stroke="#000" stroke-width="1"/><text x="814" y="502.5" font-size="8.5">pish</text><path d="M908.9 457.4H921.4V518.5H908.9Z" fill="#c0c0c0" stroke="#000" stroke-width="1"/><circle cx="908.9" cy="457.4" r="2.3" fill="#000"/><circle cx="921.4" cy="457.4" r="2.3" fill="#000"/><circle cx="908.9" cy="518.5" r="2.3" fill="#000"/><circle cx="921.4" cy="518.5" r="2.3" fill="#000"/><path d="M911.4 487.9H918.9 M911.4 487.9l3 -1.5 M911.4 487.9l3 1.5" fill="none" stroke="#000" stroke-width="1"/><path d="M927.1 457.4H939.2V518.5H927.1Z" fill="#c0c0c0" stroke="#000" stroke-width="1"/><circle cx="927.1" cy="457.4" r="2.3" fill="#000"/><circle cx="939.2" cy="457.4" r="2.3" fill="#000"/><circle cx="927.1" cy="518.5" r="2.3" fill="#000"/><circle cx="939.2" cy="518.5" r="2.3" fill="#000"/><path d="M929.6 487.9H936.7 M929.6 487.9l3 -1.5 M929.6 487.9l3 1.5" fill="none" stroke="#000" stroke-width="1"/><path d="M949.8 459.3H973.0V520.4H949.8Z" fill="#c0c0c0" stroke="#000" stroke-width="1"/><circle cx="949.8" cy="459.3" r="2.3" fill="#000"/><circle cx="973.0" cy="459.3" r="2.3" fill="#000"/><circle cx="949.8" cy="520.4" r="2.3" fill="#000"/><circle cx="973.0" cy="520.4" r="2.3" fill="#000"/><path d="M952.3 489.9H970.5 M952.3 489.9l3 -1.5 M952.3 489.9l3 1.5" fill="none" stroke="#000" stroke-width="1"/><path d="M812.8 574.7 L823 580.3 L822.5 591.3 C812 596,805 606,803.5 621 C802.5 635,802.9 650,802.9 661.3 C802.9 675,802.5 690,803.5 701 C805 716,812 726,822 731.1 L823 742.8 L812.8 747.3 L785.8 732 C772 722,765 712,764 700 C763.5 688,766 672,766.3 661.3 C766 650,763.5 636,763.6 623.5 C764 610,772 599,785.8 590.9Z" fill="#c0c0c0" stroke="#000" stroke-width="1"/><circle cx="812.8" cy="574.7" r="2.3" fill="#000"/><circle cx="823.0" cy="580.3" r="2.3" fill="#000"/><circle cx="822.5" cy="591.3" r="2.3" fill="#000"/><circle cx="785.8" cy="590.9" r="2.3" fill="#000"/><circle cx="766.3" cy="661.3" r="2.3" fill="#000"/><circle cx="802.9" cy="661.3" r="2.3" fill="#000"/><circle cx="785.8" cy="732.0" r="2.3" fill="#000"/><circle cx="812.8" cy="747.3" r="2.3" fill="#000"/><circle cx="823.0" cy="742.8" r="2.3" fill="#000"/><circle cx="822.0" cy="731.1" r="2.3" fill="#000"/><path d="M774 661.1H797 M774 661.1l3 -1.5 M774 661.1l3 1.5 M797 659v4.5" fill="none" stroke="#000" stroke-width="1"/><path d="M882 599.3 V651.6 H868 C858 651.6,855 647.6,855 639.6 V611.3 C855 603.3,858 599.3,868 599.3Z" fill="#c0c0c0" stroke="#000" stroke-width="1"/><circle cx="882.0" cy="599.3" r="2.3" fill="#000"/><circle cx="882.0" cy="651.6" r="2.3" fill="#000"/><circle cx="855.0" cy="625.5" r="2.3" fill="#000"/><circle cx="882.0" cy="625.5" r="2.3" fill="#000"/><path d="M860 625.5H878 M860 625.5l3 -1.5 M860 625.5l3 1.5 M877 623.5v4" fill="none" stroke="#000" stroke-width="1"/><path d="M882 658.8 V710.8 H868 C858 710.8,855 706.8,855 698.8 V670.8 C855 662.8,858 658.8,868 658.8Z" fill="#c0c0c0" stroke="#000" stroke-width="1"/><circle cx="882.0" cy="658.8" r="2.3" fill="#000"/><circle cx="882.0" cy="710.8" r="2.3" fill="#000"/><circle cx="855.0" cy="684.8" r="2.3" fill="#000"/><circle cx="882.0" cy="684.8" r="2.3" fill="#000"/><path d="M860 684.8H878 M860 684.8l3 -1.5 M860 684.8l3 1.5 M877 682.8v4" fill="none" stroke="#000" stroke-width="1"/><path d="M893.3 597.4H905.4V712.9H893.3Z" fill="#c0c0c0" stroke="#000" stroke-width="1"/><circle cx="893.3" cy="597.4" r="2.3" fill="#000"/><circle cx="905.4" cy="597.4" r="2.3" fill="#000"/><circle cx="893.3" cy="712.9" r="2.3" fill="#000"/><circle cx="905.4" cy="712.9" r="2.3" fill="#000"/><path d="M896 655H903 M896 655l2.5 -1.5 M896 655l2.5 1.5" fill="none" stroke="#000" stroke-width="1"/></svg>
<div class="a" style="left:2px;top:800px;width:1496px;height:19px;background:#e3e3e3;"></div>
<div class="a" style="left:2px;top:799.5px;width:1496px;height:1px;background:#bdbdbd;"></div>
<div class="t" style="left:5px;top:803.5px;font-size:9.5px;color:#222;direction:rtl;">آماده</div>
<div class="a" style="left:1089.5px;top:801.5px;width:1px;height:17px;background:#b9b9b9;"></div>
<div class="a" style="left:1090.5px;top:801.5px;width:1px;height:17px;background:#f7f7f7;"></div>
<div class="a" style="left:1129.7px;top:801.5px;width:1px;height:17px;background:#b9b9b9;"></div>
<div class="a" style="left:1130.7px;top:801.5px;width:1px;height:17px;background:#f7f7f7;"></div>
<div class="a" style="left:1172.6px;top:801.5px;width:1px;height:17px;background:#b9b9b9;"></div>
<div class="a" style="left:1173.6px;top:801.5px;width:1px;height:17px;background:#f7f7f7;"></div>
<div class="a" style="left:1302.8px;top:801.5px;width:1px;height:17px;background:#b9b9b9;"></div>
<div class="a" style="left:1303.8px;top:801.5px;width:1px;height:17px;background:#f7f7f7;"></div>
<div class="a" style="left:1347px;top:801.5px;width:1px;height:17px;background:#b9b9b9;"></div>
<div class="a" style="left:1348px;top:801.5px;width:1px;height:17px;background:#f7f7f7;"></div>
<div class="a" style="left:1430.4px;top:801.5px;width:1px;height:17px;background:#b9b9b9;"></div>
<div class="a" style="left:1431.4px;top:801.5px;width:1px;height:17px;background:#f7f7f7;"></div>
<div class="t f" id="f91" style="left:1436.6px;transform-origin:0 0;top:804px;font-size:9.5px;color:#222;transform:scaleX(0.9703);direction:rtl;">متر مربع - CM</div>
<svg class="a" style="left:1007px;top:800.5px;overflow:hidden" width="20" height="18" viewBox="0 0 20 18"><rect x="0" y="0" width="20" height="18" fill="#f6f6f6"/><circle cx="14" cy="15" r="7.5" fill="#d6d6d6" stroke="#666" stroke-width=".8"/><path d="M2 16L16 2M2 2L9 9" stroke="#111" stroke-width="1"/><path d="M16 2H13M16 2V5M2 2H5M2 2V5M2 16H5M2 16V13" stroke="#111" stroke-width="1" fill="none"/></svg>
<svg class="a" style="left:1027.3px;top:800.5px;overflow:hidden" width="20" height="18" viewBox="0 0 20 18"><rect x="0" y="0" width="20" height="18" fill="#f6f6f6"/><rect x="10" y="10" width="9" height="8" fill="#d6d6d6" stroke="#666" stroke-width=".8"/><path d="M2 8.5H16M8.5 1.5V16" stroke="#111" stroke-width="1.1"/><path d="M2 8.5L4 7M2 8.5L4 10M16 8.5L14 7M16 8.5L14 10M8.5 1.5L7 3.5M8.5 1.5L10 3.5M8.5 16L7 14M8.5 16L10 14" stroke="#111" stroke-width="1"/></svg>
<svg class="a" style="left:1047.6px;top:800.5px;overflow:hidden" width="20" height="18" viewBox="0 0 20 18"><rect x="0" y="0" width="20" height="18" fill="#f6f6f6"/><circle cx="14" cy="15" r="7" fill="#d6d6d6" stroke="#666" stroke-width=".8"/><path d="M2 16L16 2M2 2L16 14M9 1V12M2 9H16" stroke="#111" stroke-width="1"/><rect x="7.5" y="7.5" width="3" height="3" fill="#111"/></svg>
<svg class="a" style="left:1067.9px;top:800.5px;overflow:hidden" width="20" height="18" viewBox="0 0 20 18"><rect x="0" y="0" width="20" height="18" fill="#f6f6f6"/><circle cx="9" cy="11" r="7" fill="#d6d6d6" stroke="#555" stroke-width=".9"/><path d="M1 18L19 1" stroke="#111" stroke-width="1"/><path d="M7 14L9 16M10 11L12 13M13 8L15 10M16 5L18 7" stroke="#111" stroke-width=".9"/><text x="11" y="18" font-size="9" font-weight="bold" font-family="Liberation Serif" fill="#000">D</text></svg>
<div class="a" style="left:0px;top:818.5px;width:1500px;height:1.5px;background:#2b6f9e;"></div>
<div class="a" style="left:0px;top:820px;width:1500px;height:24px;background:linear-gradient(90deg,#1e3a48 0%,#1b3344 30%,#16283c 70%,#15263a 100%);"></div>
<div class="a" style="left:203px;top:820px;width:28px;height:24px;background:#3b4f5f;"></div>
<div class="a" style="left:91px;top:842.7px;width:21px;height:1.3px;background:#8fb8d8;"></div>
<div class="a" style="left:178px;top:842.7px;width:21px;height:1.3px;background:#8fb8d8;"></div>
<div class="a" style="left:203px;top:842.5px;width:28px;height:1.5px;background:#9cc4e4;"></div>
<svg class="a" style="left:0;top:820px" width="1500" height="24" viewBox="0 820 1500 24"><path d="M8 827.6L13.2 826.9V831.5H8Z M14 826.8L20.5 825.9V831.5H14Z M8 832.3H13.2V836.9L8 836.2Z M14 832.3H20.5V838L14 837.1Z" fill="#fff"/><circle cx="43.5" cy="830" r="4.6" fill="none" stroke="#fff" stroke-width="1.5"/><path d="M40.3 833.5L36.8 837.8" stroke="#fff" stroke-width="1.7" stroke-linecap="round"/><circle cx="72.5" cy="831.8" r="6.4" fill="#1f7fd4"/><path d="M66.3 833C66.5 827.5,72 824.5,76.5 826.5C79 828,79.5 831,78 833H72.5C72.5 830,69 829.5,66.3 833Z" fill="#48c78a"/><path d="M68 834.5C69 838,74 839,77 836.5C74 837.5,70 836.5,70.5 833Z" fill="#0f4f9c"/><path d="M95 827.5H100L101.2 829H108V838H95Z" fill="#e8b530"/><path d="M95 830.5H108V838H95Z" fill="#f8d55c"/><rect x="98.5" y="833.5" width="6" height="4.5" fill="#5aa3d8"/><rect x="100" y="835" width="3" height="3" fill="#dbeefa"/><rect x="124" y="825.5" width="13" height="13" rx="2.5" fill="#fbfbfb"/><circle cx="130.5" cy="832" r="4" fill="none" stroke="#3aa757" stroke-width="2.2"/><path d="M126.8 830.3A4 4 0 0 1 134 830" fill="none" stroke="#e2552e" stroke-width="2.2"/><path d="M134.3 831A4 4 0 0 1 131 836" fill="none" stroke="#f0a82a" stroke-width="2.2"/><rect x="154.5" y="825.5" width="9.5" height="13" rx="1" fill="#f3f3f3"/><rect x="156" y="827" width="6.5" height="2.6" fill="#4b5966"/><rect x="156" y="831" width="1.6" height="1.6" fill="#4b5966"/><rect x="158.45" y="831" width="1.6" height="1.6" fill="#4b5966"/><rect x="160.9" y="831" width="1.6" height="1.6" fill="#4b5966"/><rect x="156" y="833.45" width="1.6" height="1.6" fill="#4b5966"/><rect x="158.45" y="833.45" width="1.6" height="1.6" fill="#4b5966"/><rect x="160.9" y="833.45" width="1.6" height="1.6" fill="#4b5966"/><rect x="156" y="835.9" width="1.6" height="1.6" fill="#4b5966"/><rect x="158.45" y="835.9" width="1.6" height="1.6" fill="#4b5966"/><rect x="160.9" y="835.9" width="1.6" height="1.6" fill="#4b5966"/><rect x="182" y="825.5" width="12.5" height="13" rx="2.5" fill="#fdf3ef"/><path d="M184.5 836C184 830,186 827.5,188.5 829C189 826.5,192.5 827,192.5 830.5C192.5 834,190 837,186.5 837Z" fill="#e2342c"/><path d="M186.5 834.5L188 830.5L189 833L190.5 830" stroke="#ffd84a" stroke-width="1" fill="none"/><rect x="211" y="826" width="12.5" height="12" rx="1" fill="#f5efe6"/><path d="M212 827L222.5 837" stroke="#ea8f6a" stroke-width="3"/><path d="M222.5 827L212 837" stroke="#5b80dd" stroke-width="3.2"/><path d="M221 828.5L213.5 835.8" stroke="#b9c9f4" stroke-width=".9"/><g transform="translate(0,0.8)"><path d="M1329.5 833.5L1333.3 829.8L1337 833.5" fill="none" stroke="#fff" stroke-width="1.2"/><path d="M1349.5 836.5A8 8 0 0 1 1357 828.5M1351.8 836.5A5.5 5.5 0 0 1 1357 831M1354 836.5A3 3 0 0 1 1357 833.5" fill="none" stroke="#d8dde2" stroke-width="1"/><circle cx="1356.3" cy="836" r="1" fill="#fff"/><path d="M1357.5 827.5V837" stroke="#d8dde2" stroke-width=".8"/><path d="M1366 830.5H1368L1370.7 828V836L1368 833.5H1366Z" fill="none" stroke="#fff" stroke-width="1"/><path d="M1372.3 830A3 3 0 0 1 1372.3 834M1374 828.3A5.5 5.5 0 0 1 1374 835.7" fill="none" stroke="#fff" stroke-width=".9"/></g><path d="M1467.5 826.5H1480.5V835.5H1476L1474 838V835.5H1467.5Z" fill="#fff"/><path d="M1470 829.5H1478M1470 832.3H1478" stroke="#1a2d40" stroke-width=".9"/></svg>
<div class="t f" id="f92" style="left:1385.5px;transform-origin:0 0;top:828px;font-size:9.3px;color:#fff;transform:scaleX(0.8682);">ENG</div>
<div class="t f" id="f93" style="left:1412px;transform-origin:0 0;top:827.6px;font-size:9.3px;color:#fff;transform:scaleX(0.9498);direction:ltr;">05:33 ب.ظ</div>
</body></html>
